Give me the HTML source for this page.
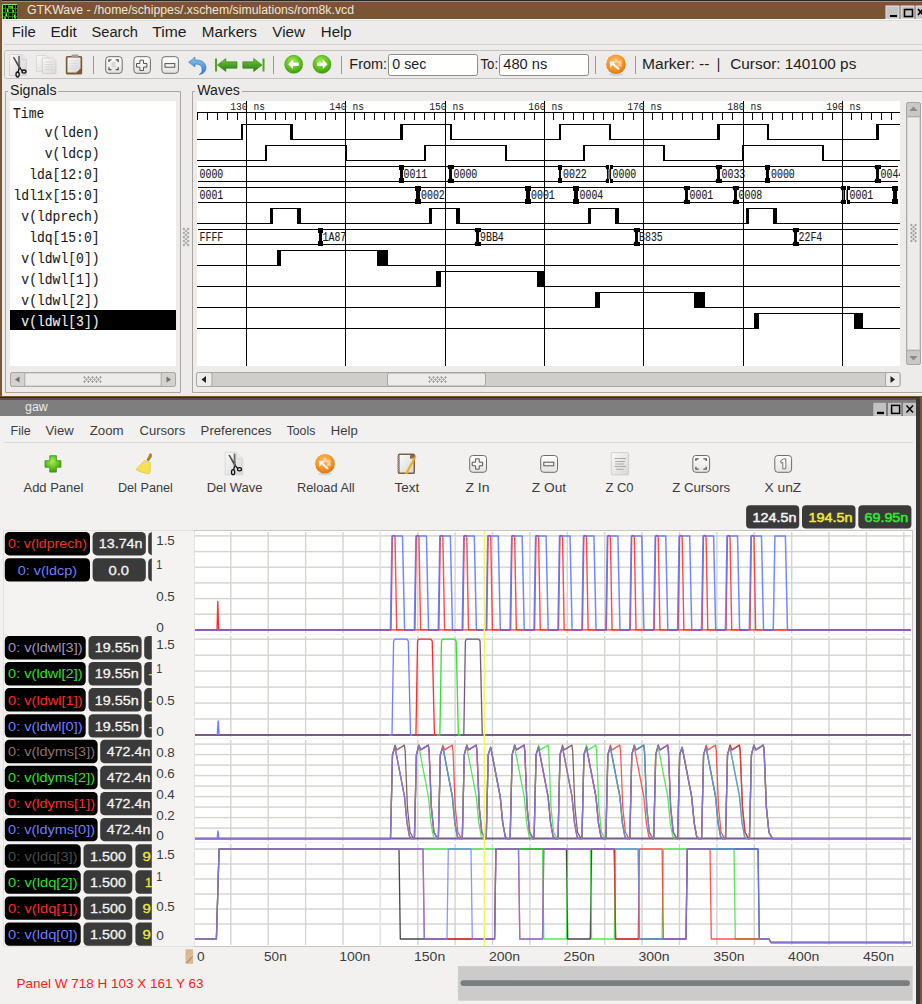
<!DOCTYPE html>
<html><head><meta charset="utf-8"><title>gtkwave + gaw</title>
<style>html,body{margin:0;padding:0;background:#edecea;overflow:hidden}svg{display:block}</style></head>
<body><svg width="922" height="1004" viewBox="0 0 922 1004">
<rect x="0" y="0" width="922" height="397" fill="#edecea" />
<rect x="0" y="0" width="922" height="20" fill="#7a5534" />
<rect x="0" y="0" width="922" height="1" fill="#262626"/>
<rect x="0" y="1" width="922" height="1" fill="#c9852f"/>
<rect x="0" y="0" width="2" height="397" fill="#7a5534" />
<rect x="2" y="4" width="15" height="15" fill="#050505" />
<g stroke="#2e8a1a" stroke-width="0.9" fill="none"><path d="M5.5 4v15 M8.5 4v15 M12.5 4v15 M15.5 4v15 M2 8.5h15 M2 12.5h15 M2 16.5h15"/></g>
<path d="M2.5 19V4.5H17" stroke="#8ee870" stroke-width="1" fill="none"/>
<path d="M8.5 6.8h3.7v1.6 M13.2 10v2.2 M14.5 14.5l0.5 4 M7.5 9v3 M6.5 13.2v3 M5 17v2" stroke="#7ef040" stroke-width="1.3" fill="none"/>
<text x="27" y="14" font-family="Liberation Sans" font-size="12" fill="#efe6da" text-anchor="start" font-weight="normal" textLength="327" lengthAdjust="spacingAndGlyphs" >GTKWave - /home/schippes/.xschem/simulations/rom8k.vcd</text>
<rect x="886" y="6" width="13" height="13" fill="#c4c4c4" stroke="#e6e6e6" stroke-width="1"/>
<rect x="901" y="6" width="13" height="13" fill="#c4c4c4" stroke="#e6e6e6" stroke-width="1"/>
<rect x="916" y="6" width="13" height="13" fill="#c4c4c4" stroke="#e6e6e6" stroke-width="1"/>
<rect x="890" y="15" width="7" height="2" fill="#000" />
<rect x="904.5" y="9.5" width="8" height="7" fill="none" stroke="#000" stroke-width="1.6"/>
<path d="M918 9l5 6 M923 9l-5 6" stroke="#000" stroke-width="1.6"/>
<rect x="2" y="19" width="920" height="1" fill="#fbfbfa"/>
<rect x="4" y="20" width="918" height="24" fill="#edecea" />
<rect x="4" y="20" width="918" height="1" fill="#dedcd8"/>
<rect x="4" y="44" width="918" height="1" fill="#d4d2ce"/>
<text x="11.8" y="37" font-family="Liberation Sans" font-size="14" fill="#1c1c1c" text-anchor="start" font-weight="normal" textLength="23.9" lengthAdjust="spacingAndGlyphs" >File</text>
<text x="50.4" y="37" font-family="Liberation Sans" font-size="14" fill="#1c1c1c" text-anchor="start" font-weight="normal" textLength="26.4" lengthAdjust="spacingAndGlyphs" >Edit</text>
<text x="91.6" y="37" font-family="Liberation Sans" font-size="14" fill="#1c1c1c" text-anchor="start" font-weight="normal" textLength="46.3" lengthAdjust="spacingAndGlyphs" >Search</text>
<text x="152.20000000000002" y="37" font-family="Liberation Sans" font-size="14" fill="#1c1c1c" text-anchor="start" font-weight="normal" textLength="34.3" lengthAdjust="spacingAndGlyphs" >Time</text>
<text x="201.8" y="37" font-family="Liberation Sans" font-size="14" fill="#1c1c1c" text-anchor="start" font-weight="normal" textLength="55.0" lengthAdjust="spacingAndGlyphs" >Markers</text>
<text x="272.3" y="37" font-family="Liberation Sans" font-size="14" fill="#1c1c1c" text-anchor="start" font-weight="normal" textLength="32.7" lengthAdjust="spacingAndGlyphs" >View</text>
<text x="320.8" y="37" font-family="Liberation Sans" font-size="14" fill="#1c1c1c" text-anchor="start" font-weight="normal" textLength="30.9" lengthAdjust="spacingAndGlyphs" >Help</text>
<rect x="4.5" y="50.5" width="922" height="28" fill="#edecea" stroke="#c3c1bd" stroke-width="1" rx="2"/>
<defs>
<linearGradient id="pg" x1="0" y1="0" x2="1" y2="1"><stop offset="0" stop-color="#fafafa"/><stop offset="1" stop-color="#d6d6d6"/></linearGradient>
<linearGradient id="btn" x1="0" y1="0" x2="0" y2="1"><stop offset="0" stop-color="#ffffff"/><stop offset="1" stop-color="#e2e2e2"/></linearGradient>
<radialGradient id="grn" cx="0.45" cy="0.35" r="0.7"><stop offset="0" stop-color="#a8ec5a"/><stop offset="0.6" stop-color="#5cbf1c"/><stop offset="1" stop-color="#3d8f10"/></radialGradient>
<radialGradient id="org" cx="0.45" cy="0.35" r="0.7"><stop offset="0" stop-color="#ffc070"/><stop offset="0.6" stop-color="#f39322"/><stop offset="1" stop-color="#d86f0c"/></radialGradient>
<linearGradient id="blu" x1="0" y1="0" x2="0" y2="1"><stop offset="0" stop-color="#8cc4f0"/><stop offset="1" stop-color="#2f78c4"/></linearGradient>
<linearGradient id="garr" x1="0" y1="0" x2="0" y2="1"><stop offset="0" stop-color="#74c840"/><stop offset="0.5" stop-color="#4aa424"/><stop offset="1" stop-color="#2a7a10"/></linearGradient>
</defs>
<path d="M9.5 54.5h12.5l4.5 5v16h-17z" fill="url(#pg)" stroke="#cfcfcf" stroke-width="0.8"/>
<path d="M22 54.5v5h4.5" fill="#e8e8e8" stroke="#c8c8c8" stroke-width="0.6"/>
<g transform="translate(-215.5,-397.7)"><path d="M228.6 455 L229.8 455.3 L235.8 465.2 L234.8 466.2z" fill="#4a4a4a" stroke="#222" stroke-width="0.4"/><path d="M234 453.8 L235.1 454 L235.3 466 L234.1 467.8z" fill="#8a8a8a" stroke="#222" stroke-width="0.4"/><path d="M235.3 465.6 L237.8 468.6 M234.6 466.5 L233.6 469.6" stroke="#111" stroke-width="1.3" fill="none"/><ellipse cx="233.1" cy="472.2" rx="1.6" ry="2.5" fill="none" stroke="#111" stroke-width="1.3"/><ellipse cx="239.5" cy="469.3" rx="2" ry="1.6" fill="none" stroke="#111" stroke-width="1.3"/></g>
<path d="M36.5 55.5h10l3 3v13h-13z" fill="url(#pg)" stroke="#d2d2d2" stroke-width="0.8"/>
<path d="M42.5 58h10l3.4 3.4v12.3h-13.4z" fill="url(#pg)" stroke="#cdcdcd" stroke-width="0.8"/>
<g stroke="#d0d0d0" stroke-width="0.7"><path d="M44.5 62h9 M44.5 64.5h9 M44.5 67h9 M44.5 69.5h9"/></g>
<rect x="65.8" y="56" width="16.4" height="18.4" rx="1.5" fill="#7c5b34"/>
<path d="M67.5 57.5h13v10.5l-4.5 4.5h-8.5z" fill="url(#pg)"/>
<path d="M76 72.5l4.5-4.5h-4.5z" fill="#efefef" stroke="#bdbdbd" stroke-width="0.5"/>
<rect x="71.5" y="54.6" width="7" height="3" rx="1" fill="#9c9c9c"/>
<g stroke="#d2d2d2" stroke-width="0.7"><path d="M69.5 61h9 M69.5 63.5h9 M69.5 66h9 M69.5 68.5h7"/></g>
<rect x="93.0" y="56" width="1" height="18" fill="#9a9894"/>
<rect x="273.0" y="56" width="1" height="18" fill="#9a9894"/>
<rect x="341.0" y="56" width="1" height="18" fill="#9a9894"/>
<rect x="595.0" y="56" width="1" height="18" fill="#9a9894"/>
<rect x="635.0" y="56" width="1" height="18" fill="#9a9894"/>
<rect x="105.7" y="56.7" width="16.5" height="16.6" rx="3" fill="url(#btn)" stroke="#6d6d6d" stroke-width="1"/>
<rect x="133.9" y="56.7" width="16.5" height="16.6" rx="3" fill="url(#btn)" stroke="#6d6d6d" stroke-width="1"/>
<rect x="161.9" y="56.7" width="16.5" height="16.6" rx="3" fill="url(#btn)" stroke="#6d6d6d" stroke-width="1"/>
<g stroke="#555" stroke-width="1.3" fill="none"><path d="M109 62v-2.2h2.5 M115.7 59.8h2.5v2.2 M118.2 67.3v2.3h-2.5 M111.5 69.6h-2.5v-2.3"/></g>
<rect x="111.5" y="62" width="4.2" height="5.3" fill="#d8d8d8"/>
<path d="M139.9 60.2h3.6v3.3h3.4v3.6h-3.4v3.4h-3.6v-3.4h-3.4v-3.6h3.4z" fill="#f4f4f4" stroke="#555" stroke-width="1"/>
<rect x="165" y="63.6" width="9.8" height="3.6" fill="#f4f4f4" stroke="#555" stroke-width="1"/>
<path d="M195 57 L188.6 62.2 L195 67 L195 64.2 C199.5 63.8 202.5 66 202 70.5 C201.7 72.5 200.5 74 199 74.6 C203.5 74.2 206.2 71 206 67.2 C205.6 62 201 59.6 195 60z" fill="url(#blu)" stroke="#2a6ab0" stroke-width="0.5"/>
<rect x="215" y="58.5" width="2" height="13" fill="#4aa81e"/>
<path d="M217.5 65 L225.8 58.5 V61.8 H237 V68.2 H225.8 V71.5z" fill="url(#garr)" stroke="#2f7a14" stroke-width="0.6"/>
<rect x="262.5" y="58.5" width="2" height="13" fill="#4aa81e"/>
<path d="M262 65 L253.7 58.5 V61.8 H242.8 V68.2 H253.7 V71.5z" fill="url(#garr)" stroke="#2f7a14" stroke-width="0.6"/>
<ellipse cx="293.7" cy="66.2" rx="8" ry="2.5" fill="#000" fill-opacity="0.12"/>
<circle cx="293.7" cy="64.3" r="9" fill="url(#grn)" stroke="#3f9a12" stroke-width="0.6"/>
<path d="M288.2 64.3 L292.9 59.6 V62.5 H298.7 V66.1 H292.9 V69z" fill="#fff"/>
<ellipse cx="322" cy="66.2" rx="8" ry="2.5" fill="#000" fill-opacity="0.12"/>
<circle cx="322" cy="64.3" r="9" fill="url(#grn)" stroke="#3f9a12" stroke-width="0.6"/>
<path d="M327.5 64.3 L322.8 59.6 V62.5 H317 V66.1 H322.8 V69z" fill="#fff"/>
<text x="349.3" y="69" font-family="Liberation Sans" font-size="14" fill="#1c1c1c" text-anchor="start" font-weight="normal" textLength="37.8" lengthAdjust="spacingAndGlyphs" >From:</text>
<rect x="388.5" y="54.5" width="89" height="21" rx="2" fill="#fff" stroke="#8f8c87" stroke-width="1"/>
<text x="392.3" y="69" font-family="Liberation Sans" font-size="14" fill="#1c1c1c" text-anchor="start" font-weight="normal" textLength="34" lengthAdjust="spacingAndGlyphs" >0 sec</text>
<text x="480.5" y="69" font-family="Liberation Sans" font-size="14" fill="#1c1c1c" text-anchor="start" font-weight="normal" textLength="17.6" lengthAdjust="spacingAndGlyphs" >To:</text>
<rect x="499.5" y="54.5" width="89" height="21" rx="2" fill="#fff" stroke="#8f8c87" stroke-width="1"/>
<text x="503.3" y="69" font-family="Liberation Sans" font-size="14" fill="#1c1c1c" text-anchor="start" font-weight="normal" textLength="44" lengthAdjust="spacingAndGlyphs" >480 ns</text>
<g transform="translate(291,-399.4)"><ellipse cx="325" cy="473.8" rx="7" ry="1.6" fill="#9aa8b8" fill-opacity="0.35"/><circle cx="325" cy="463.7" r="9.8" fill="url(#org)"/><path d="M323.5 460 L324.6 457.4 L327.5 460.3 L330.5 459.6 L330.8 466.2 L325.8 465.6 L328 463.2z" fill="#f8d6a8" fill-opacity="0.85"/><path d="M318.8 460.8 L325 460.9 L323 463 L328.8 467.9 L327.3 469.5 L321.5 464.5 L319.2 467.2z" fill="#f4f4f4"/></g>
<text x="642" y="69" font-family="Liberation Sans" font-size="14" fill="#1c1c1c" text-anchor="start" font-weight="normal" textLength="67.5" lengthAdjust="spacingAndGlyphs" >Marker: --</text>
<text x="716.8" y="69" font-family="Liberation Sans" font-size="14" fill="#1c1c1c" text-anchor="start" font-weight="normal" textLength="3.5" lengthAdjust="spacingAndGlyphs" >|</text>
<text x="730.3" y="69" font-family="Liberation Sans" font-size="14" fill="#1c1c1c" text-anchor="start" font-weight="normal" textLength="126" lengthAdjust="spacingAndGlyphs" >Cursor: 140100 ps</text>
<path d="M8 91.5 H5.5 V392.5 H180.5 V91.5 H58" fill="none" stroke="#a9a6a1" stroke-width="1"/>
<text x="10" y="95" font-family="Liberation Sans" font-size="14" fill="#1c1c1c" text-anchor="start" font-weight="normal" textLength="46.5" lengthAdjust="spacingAndGlyphs" >Signals</text>
<rect x="10" y="101" width="166" height="265" fill="#ffffff" />
<rect x="10" y="310" width="166" height="20" fill="#000000" />
<text x="13" y="117.5" font-family="Liberation Mono" font-size="14.5" fill="#1a1a1a" text-anchor="start" font-weight="normal" textLength="31.32" lengthAdjust="spacingAndGlyphs" stroke="#1a1a1a" stroke-width="0.1">Time</text>
<text x="44.79" y="136.8" font-family="Liberation Mono" font-size="14.5" fill="#1a1a1a" text-anchor="start" font-weight="normal" textLength="54.81" lengthAdjust="spacingAndGlyphs" stroke="#1a1a1a" stroke-width="0.1">v(lden)</text>
<text x="44.79" y="157.8" font-family="Liberation Mono" font-size="14.5" fill="#1a1a1a" text-anchor="start" font-weight="normal" textLength="54.81" lengthAdjust="spacingAndGlyphs" stroke="#1a1a1a" stroke-width="0.1">v(ldcp)</text>
<text x="29.13" y="178.8" font-family="Liberation Mono" font-size="14.5" fill="#1a1a1a" text-anchor="start" font-weight="normal" textLength="70.47" lengthAdjust="spacingAndGlyphs" stroke="#1a1a1a" stroke-width="0.1">lda[12:0]</text>
<text x="13.47" y="199.8" font-family="Liberation Mono" font-size="14.5" fill="#1a1a1a" text-anchor="start" font-weight="normal" textLength="86.13" lengthAdjust="spacingAndGlyphs" stroke="#1a1a1a" stroke-width="0.1">ldl1x[15:0]</text>
<text x="21.3" y="220.8" font-family="Liberation Mono" font-size="14.5" fill="#1a1a1a" text-anchor="start" font-weight="normal" textLength="78.3" lengthAdjust="spacingAndGlyphs" stroke="#1a1a1a" stroke-width="0.1">v(ldprech)</text>
<text x="29.13" y="241.8" font-family="Liberation Mono" font-size="14.5" fill="#1a1a1a" text-anchor="start" font-weight="normal" textLength="70.47" lengthAdjust="spacingAndGlyphs" stroke="#1a1a1a" stroke-width="0.1">ldq[15:0]</text>
<text x="21.3" y="262.8" font-family="Liberation Mono" font-size="14.5" fill="#1a1a1a" text-anchor="start" font-weight="normal" textLength="78.3" lengthAdjust="spacingAndGlyphs" stroke="#1a1a1a" stroke-width="0.1">v(ldwl[0])</text>
<text x="21.3" y="283.8" font-family="Liberation Mono" font-size="14.5" fill="#1a1a1a" text-anchor="start" font-weight="normal" textLength="78.3" lengthAdjust="spacingAndGlyphs" stroke="#1a1a1a" stroke-width="0.1">v(ldwl[1])</text>
<text x="21.3" y="304.8" font-family="Liberation Mono" font-size="14.5" fill="#1a1a1a" text-anchor="start" font-weight="normal" textLength="78.3" lengthAdjust="spacingAndGlyphs" stroke="#1a1a1a" stroke-width="0.1">v(ldwl[2])</text>
<text x="21.3" y="325.8" font-family="Liberation Mono" font-size="14.5" fill="#f0f0f0" text-anchor="start" font-weight="normal" textLength="78.3" lengthAdjust="spacingAndGlyphs" stroke="#f0f0f0" stroke-width="0.1">v(ldwl[3])</text>
<rect x="10.5" y="372.5" width="165" height="14" rx="2" fill="#e4e3e0" stroke="#a8a6a2" stroke-width="1"/>
<rect x="10.5" y="372.5" width="14.5" height="14" rx="2" fill="#d3d2cf" stroke="#a8a6a2" stroke-width="1"/>
<rect x="161" y="372.5" width="14.5" height="14" rx="2" fill="#d3d2cf" stroke="#a8a6a2" stroke-width="1"/>
<rect x="25" y="373" width="136" height="13" fill="#edecea" stroke="#b8b6b2" stroke-width="0.8"/>
<path d="M15 379.5 L19.5 376.5 V382.5z" fill="#6e6e6e"/><path d="M171 379.5 L166.5 376.5 V382.5z" fill="#6e6e6e"/>
<g fill="#9c9c9c"><rect x="83.3" y="376.9" width="2.4" height="1"/><rect x="84.0" y="376.2" width="1" height="2.4"/><rect x="87.3" y="376.9" width="2.4" height="1"/><rect x="88.0" y="376.2" width="1" height="2.4"/><rect x="91.3" y="376.9" width="2.4" height="1"/><rect x="92.0" y="376.2" width="1" height="2.4"/><rect x="95.3" y="376.9" width="2.4" height="1"/><rect x="96.0" y="376.2" width="1" height="2.4"/><rect x="99.3" y="376.9" width="2.4" height="1"/><rect x="100.0" y="376.2" width="1" height="2.4"/><rect x="85.3" y="379.0" width="2.4" height="1"/><rect x="86.0" y="378.3" width="1" height="2.4"/><rect x="89.3" y="379.0" width="2.4" height="1"/><rect x="90.0" y="378.3" width="1" height="2.4"/><rect x="93.3" y="379.0" width="2.4" height="1"/><rect x="94.0" y="378.3" width="1" height="2.4"/><rect x="97.3" y="379.0" width="2.4" height="1"/><rect x="98.0" y="378.3" width="1" height="2.4"/><rect x="83.3" y="381.1" width="2.4" height="1"/><rect x="84.0" y="380.4" width="1" height="2.4"/><rect x="87.3" y="381.1" width="2.4" height="1"/><rect x="88.0" y="380.4" width="1" height="2.4"/><rect x="91.3" y="381.1" width="2.4" height="1"/><rect x="92.0" y="380.4" width="1" height="2.4"/><rect x="95.3" y="381.1" width="2.4" height="1"/><rect x="96.0" y="380.4" width="1" height="2.4"/><rect x="99.3" y="381.1" width="2.4" height="1"/><rect x="100.0" y="380.4" width="1" height="2.4"/></g>
<g fill="#9c9c9c"><rect x="182.7" y="228.5" width="2.4" height="1"/><rect x="183.4" y="227.8" width="1" height="2.4"/><rect x="182.7" y="232.5" width="2.4" height="1"/><rect x="183.4" y="231.8" width="1" height="2.4"/><rect x="182.7" y="236.5" width="2.4" height="1"/><rect x="183.4" y="235.8" width="1" height="2.4"/><rect x="182.7" y="240.5" width="2.4" height="1"/><rect x="183.4" y="239.8" width="1" height="2.4"/><rect x="182.7" y="244.5" width="2.4" height="1"/><rect x="183.4" y="243.8" width="1" height="2.4"/><rect x="184.8" y="230.5" width="2.4" height="1"/><rect x="185.5" y="229.8" width="1" height="2.4"/><rect x="184.8" y="234.5" width="2.4" height="1"/><rect x="185.5" y="233.8" width="1" height="2.4"/><rect x="184.8" y="238.5" width="2.4" height="1"/><rect x="185.5" y="237.8" width="1" height="2.4"/><rect x="184.8" y="242.5" width="2.4" height="1"/><rect x="185.5" y="241.8" width="1" height="2.4"/><rect x="186.9" y="228.5" width="2.4" height="1"/><rect x="187.6" y="227.8" width="1" height="2.4"/><rect x="186.9" y="232.5" width="2.4" height="1"/><rect x="187.6" y="231.8" width="1" height="2.4"/><rect x="186.9" y="236.5" width="2.4" height="1"/><rect x="187.6" y="235.8" width="1" height="2.4"/><rect x="186.9" y="240.5" width="2.4" height="1"/><rect x="187.6" y="239.8" width="1" height="2.4"/><rect x="186.9" y="244.5" width="2.4" height="1"/><rect x="187.6" y="243.8" width="1" height="2.4"/></g>
<path d="M195 91.5 H192.5 V392.5 H922 M922 91.5 H242" fill="none" stroke="#a9a6a1" stroke-width="1"/>
<rect x="193" y="393" width="729" height="1" fill="#f8f8f7"/>
<text x="197.3" y="95" font-family="Liberation Sans" font-size="14" fill="#1c1c1c" text-anchor="start" font-weight="normal" textLength="42.5" lengthAdjust="spacingAndGlyphs" >Waves</text>
<rect x="197" y="101" width="703" height="265" fill="#ffffff" />
<rect x="906.5" y="102.5" width="14" height="262" rx="2" fill="#e4e3e0" stroke="#a8a6a2" stroke-width="1"/>
<rect x="906.5" y="102.5" width="14" height="14" rx="2" fill="#c9c8c5" stroke="#a8a6a2" stroke-width="1"/>
<rect x="906.5" y="350.5" width="14" height="14" rx="2" fill="#c9c8c5" stroke="#a8a6a2" stroke-width="1"/>
<rect x="907" y="117" width="13" height="233" rx="1" fill="#edecea" stroke="#b8b6b2" stroke-width="0.8"/>
<path d="M913.5 106.5 L917.5 111 H909.5z" fill="#8a8a8a"/><path d="M913.5 360.5 L917.5 356 H909.5z" fill="#8a8a8a"/>
<g fill="#9c9c9c"><rect x="910.2" y="224.5" width="2.4" height="1"/><rect x="910.9" y="223.8" width="1" height="2.4"/><rect x="910.2" y="228.5" width="2.4" height="1"/><rect x="910.9" y="227.8" width="1" height="2.4"/><rect x="910.2" y="232.5" width="2.4" height="1"/><rect x="910.9" y="231.8" width="1" height="2.4"/><rect x="910.2" y="236.5" width="2.4" height="1"/><rect x="910.9" y="235.8" width="1" height="2.4"/><rect x="910.2" y="240.5" width="2.4" height="1"/><rect x="910.9" y="239.8" width="1" height="2.4"/><rect x="912.3" y="226.5" width="2.4" height="1"/><rect x="913.0" y="225.8" width="1" height="2.4"/><rect x="912.3" y="230.5" width="2.4" height="1"/><rect x="913.0" y="229.8" width="1" height="2.4"/><rect x="912.3" y="234.5" width="2.4" height="1"/><rect x="913.0" y="233.8" width="1" height="2.4"/><rect x="912.3" y="238.5" width="2.4" height="1"/><rect x="913.0" y="237.8" width="1" height="2.4"/><rect x="914.4" y="224.5" width="2.4" height="1"/><rect x="915.1" y="223.8" width="1" height="2.4"/><rect x="914.4" y="228.5" width="2.4" height="1"/><rect x="915.1" y="227.8" width="1" height="2.4"/><rect x="914.4" y="232.5" width="2.4" height="1"/><rect x="915.1" y="231.8" width="1" height="2.4"/><rect x="914.4" y="236.5" width="2.4" height="1"/><rect x="915.1" y="235.8" width="1" height="2.4"/><rect x="914.4" y="240.5" width="2.4" height="1"/><rect x="915.1" y="239.8" width="1" height="2.4"/></g>
<rect x="196.5" y="372.5" width="703.5" height="14" rx="2" fill="#cfcecb" stroke="#a8a6a2" stroke-width="1"/>
<rect x="196.5" y="372.5" width="15.5" height="14" rx="2" fill="#edecea" stroke="#a8a6a2" stroke-width="1"/>
<rect x="885.5" y="372.5" width="14.5" height="14" rx="2" fill="#edecea" stroke="#a8a6a2" stroke-width="1"/>
<rect x="387.5" y="373" width="98" height="13" rx="2" fill="#edecea" stroke="#a8a6a2" stroke-width="1"/>
<path d="M201.5 379.5 L206 376 V383z" fill="#222"/><path d="M895 379.5 L890.5 376 V383z" fill="#222"/>
<g fill="#9c9c9c"><rect x="428.3" y="376.9" width="2.4" height="1"/><rect x="429.0" y="376.2" width="1" height="2.4"/><rect x="432.3" y="376.9" width="2.4" height="1"/><rect x="433.0" y="376.2" width="1" height="2.4"/><rect x="436.3" y="376.9" width="2.4" height="1"/><rect x="437.0" y="376.2" width="1" height="2.4"/><rect x="440.3" y="376.9" width="2.4" height="1"/><rect x="441.0" y="376.2" width="1" height="2.4"/><rect x="444.3" y="376.9" width="2.4" height="1"/><rect x="445.0" y="376.2" width="1" height="2.4"/><rect x="430.3" y="379.0" width="2.4" height="1"/><rect x="431.0" y="378.3" width="1" height="2.4"/><rect x="434.3" y="379.0" width="2.4" height="1"/><rect x="435.0" y="378.3" width="1" height="2.4"/><rect x="438.3" y="379.0" width="2.4" height="1"/><rect x="439.0" y="378.3" width="1" height="2.4"/><rect x="442.3" y="379.0" width="2.4" height="1"/><rect x="443.0" y="378.3" width="1" height="2.4"/><rect x="428.3" y="381.1" width="2.4" height="1"/><rect x="429.0" y="380.4" width="1" height="2.4"/><rect x="432.3" y="381.1" width="2.4" height="1"/><rect x="433.0" y="380.4" width="1" height="2.4"/><rect x="436.3" y="381.1" width="2.4" height="1"/><rect x="437.0" y="380.4" width="1" height="2.4"/><rect x="440.3" y="381.1" width="2.4" height="1"/><rect x="441.0" y="380.4" width="1" height="2.4"/><rect x="444.3" y="381.1" width="2.4" height="1"/><rect x="445.0" y="380.4" width="1" height="2.4"/></g>
<rect x="0" y="396" width="922" height="1" fill="#7a5534"/>
<g shape-rendering="crispEdges">
<rect x="197" y="112" width="703" height="1" fill="#000000"/>
<rect x="197" y="113" width="1" height="7" fill="#000000"/>
<rect x="207" y="113" width="1" height="7" fill="#000000"/>
<rect x="217" y="113" width="1" height="7" fill="#000000"/>
<rect x="227" y="113" width="1" height="7" fill="#000000"/>
<rect x="237" y="113" width="1" height="7" fill="#000000"/>
<rect x="255" y="113" width="1" height="7" fill="#000000"/>
<rect x="265" y="113" width="1" height="7" fill="#000000"/>
<rect x="275" y="113" width="1" height="7" fill="#000000"/>
<rect x="285" y="113" width="1" height="7" fill="#000000"/>
<rect x="295" y="113" width="1" height="7" fill="#000000"/>
<rect x="305" y="113" width="1" height="7" fill="#000000"/>
<rect x="315" y="113" width="1" height="7" fill="#000000"/>
<rect x="325" y="113" width="1" height="7" fill="#000000"/>
<rect x="335" y="113" width="1" height="7" fill="#000000"/>
<rect x="354" y="113" width="1" height="7" fill="#000000"/>
<rect x="364" y="113" width="1" height="7" fill="#000000"/>
<rect x="374" y="113" width="1" height="7" fill="#000000"/>
<rect x="384" y="113" width="1" height="7" fill="#000000"/>
<rect x="394" y="113" width="1" height="7" fill="#000000"/>
<rect x="404" y="113" width="1" height="7" fill="#000000"/>
<rect x="414" y="113" width="1" height="7" fill="#000000"/>
<rect x="424" y="113" width="1" height="7" fill="#000000"/>
<rect x="434" y="113" width="1" height="7" fill="#000000"/>
<rect x="454" y="113" width="1" height="7" fill="#000000"/>
<rect x="464" y="113" width="1" height="7" fill="#000000"/>
<rect x="474" y="113" width="1" height="7" fill="#000000"/>
<rect x="484" y="113" width="1" height="7" fill="#000000"/>
<rect x="494" y="113" width="1" height="7" fill="#000000"/>
<rect x="504" y="113" width="1" height="7" fill="#000000"/>
<rect x="514" y="113" width="1" height="7" fill="#000000"/>
<rect x="524" y="113" width="1" height="7" fill="#000000"/>
<rect x="534" y="113" width="1" height="7" fill="#000000"/>
<rect x="553" y="113" width="1" height="7" fill="#000000"/>
<rect x="563" y="113" width="1" height="7" fill="#000000"/>
<rect x="573" y="113" width="1" height="7" fill="#000000"/>
<rect x="583" y="113" width="1" height="7" fill="#000000"/>
<rect x="593" y="113" width="1" height="7" fill="#000000"/>
<rect x="603" y="113" width="1" height="7" fill="#000000"/>
<rect x="613" y="113" width="1" height="7" fill="#000000"/>
<rect x="623" y="113" width="1" height="7" fill="#000000"/>
<rect x="633" y="113" width="1" height="7" fill="#000000"/>
<rect x="652" y="113" width="1" height="7" fill="#000000"/>
<rect x="662" y="113" width="1" height="7" fill="#000000"/>
<rect x="672" y="113" width="1" height="7" fill="#000000"/>
<rect x="682" y="113" width="1" height="7" fill="#000000"/>
<rect x="692" y="113" width="1" height="7" fill="#000000"/>
<rect x="702" y="113" width="1" height="7" fill="#000000"/>
<rect x="712" y="113" width="1" height="7" fill="#000000"/>
<rect x="722" y="113" width="1" height="7" fill="#000000"/>
<rect x="732" y="113" width="1" height="7" fill="#000000"/>
<rect x="752" y="113" width="1" height="7" fill="#000000"/>
<rect x="762" y="113" width="1" height="7" fill="#000000"/>
<rect x="772" y="113" width="1" height="7" fill="#000000"/>
<rect x="782" y="113" width="1" height="7" fill="#000000"/>
<rect x="792" y="113" width="1" height="7" fill="#000000"/>
<rect x="802" y="113" width="1" height="7" fill="#000000"/>
<rect x="812" y="113" width="1" height="7" fill="#000000"/>
<rect x="822" y="113" width="1" height="7" fill="#000000"/>
<rect x="832" y="113" width="1" height="7" fill="#000000"/>
<rect x="851" y="113" width="1" height="7" fill="#000000"/>
<rect x="861" y="113" width="1" height="7" fill="#000000"/>
<rect x="871" y="113" width="1" height="7" fill="#000000"/>
<rect x="881" y="113" width="1" height="7" fill="#000000"/>
<rect x="891" y="113" width="1" height="7" fill="#000000"/>
<rect x="246" y="101" width="1" height="265" fill="#000000"/>
<rect x="345" y="101" width="1" height="265" fill="#000000"/>
<rect x="445" y="101" width="1" height="265" fill="#000000"/>
<rect x="544" y="101" width="1" height="265" fill="#000000"/>
<rect x="643" y="101" width="1" height="265" fill="#000000"/>
<rect x="743" y="101" width="1" height="265" fill="#000000"/>
<rect x="842" y="101" width="1" height="265" fill="#000000"/>
</g>
<text x="230.2" y="110" font-family="Liberation Mono" font-size="11.8" fill="#1a1a1a" text-anchor="start" font-weight="normal" textLength="17.5" lengthAdjust="spacingAndGlyphs" >130</text>
<text x="253.5" y="110" font-family="Liberation Mono" font-size="11.8" fill="#1a1a1a" text-anchor="start" font-weight="normal" textLength="11.5" lengthAdjust="spacingAndGlyphs" >ns</text>
<text x="329.2" y="110" font-family="Liberation Mono" font-size="11.8" fill="#1a1a1a" text-anchor="start" font-weight="normal" textLength="17.5" lengthAdjust="spacingAndGlyphs" >140</text>
<text x="352.5" y="110" font-family="Liberation Mono" font-size="11.8" fill="#1a1a1a" text-anchor="start" font-weight="normal" textLength="11.5" lengthAdjust="spacingAndGlyphs" >ns</text>
<text x="429.2" y="110" font-family="Liberation Mono" font-size="11.8" fill="#1a1a1a" text-anchor="start" font-weight="normal" textLength="17.5" lengthAdjust="spacingAndGlyphs" >150</text>
<text x="452.5" y="110" font-family="Liberation Mono" font-size="11.8" fill="#1a1a1a" text-anchor="start" font-weight="normal" textLength="11.5" lengthAdjust="spacingAndGlyphs" >ns</text>
<text x="528.2" y="110" font-family="Liberation Mono" font-size="11.8" fill="#1a1a1a" text-anchor="start" font-weight="normal" textLength="17.5" lengthAdjust="spacingAndGlyphs" >160</text>
<text x="551.5" y="110" font-family="Liberation Mono" font-size="11.8" fill="#1a1a1a" text-anchor="start" font-weight="normal" textLength="11.5" lengthAdjust="spacingAndGlyphs" >ns</text>
<text x="627.2" y="110" font-family="Liberation Mono" font-size="11.8" fill="#1a1a1a" text-anchor="start" font-weight="normal" textLength="17.5" lengthAdjust="spacingAndGlyphs" >170</text>
<text x="650.5" y="110" font-family="Liberation Mono" font-size="11.8" fill="#1a1a1a" text-anchor="start" font-weight="normal" textLength="11.5" lengthAdjust="spacingAndGlyphs" >ns</text>
<text x="727.2" y="110" font-family="Liberation Mono" font-size="11.8" fill="#1a1a1a" text-anchor="start" font-weight="normal" textLength="17.5" lengthAdjust="spacingAndGlyphs" >180</text>
<text x="750.5" y="110" font-family="Liberation Mono" font-size="11.8" fill="#1a1a1a" text-anchor="start" font-weight="normal" textLength="11.5" lengthAdjust="spacingAndGlyphs" >ns</text>
<text x="826.2" y="110" font-family="Liberation Mono" font-size="11.8" fill="#1a1a1a" text-anchor="start" font-weight="normal" textLength="17.5" lengthAdjust="spacingAndGlyphs" >190</text>
<text x="849.5" y="110" font-family="Liberation Mono" font-size="11.8" fill="#1a1a1a" text-anchor="start" font-weight="normal" textLength="11.5" lengthAdjust="spacingAndGlyphs" >ns</text>
<g shape-rendering="crispEdges">
<rect x="197" y="139" width="45" height="1" fill="#000000"/>
<rect x="241" y="124" width="2" height="16" fill="#000000" />
<rect x="242" y="124" width="49" height="1" fill="#000000"/>
<rect x="290" y="124" width="3" height="16" fill="#000000" />
<rect x="292" y="139" width="109" height="1" fill="#000000"/>
<rect x="400" y="124" width="3" height="16" fill="#000000" />
<rect x="402" y="124" width="49" height="1" fill="#000000"/>
<rect x="450" y="124" width="2" height="16" fill="#000000" />
<rect x="451" y="139" width="109" height="1" fill="#000000"/>
<rect x="559" y="124" width="2" height="16" fill="#000000" />
<rect x="560" y="124" width="50" height="1" fill="#000000"/>
<rect x="609" y="124" width="2" height="16" fill="#000000" />
<rect x="610" y="139" width="108" height="1" fill="#000000"/>
<rect x="717" y="124" width="3" height="16" fill="#000000" />
<rect x="719" y="124" width="49" height="1" fill="#000000"/>
<rect x="767" y="124" width="2" height="16" fill="#000000" />
<rect x="768" y="139" width="109" height="1" fill="#000000"/>
<rect x="876" y="124" width="3" height="16" fill="#000000" />
<rect x="878" y="124" width="22" height="1" fill="#000000"/>
<rect x="197" y="160" width="69" height="1" fill="#000000"/>
<rect x="265" y="145" width="2" height="16" fill="#000000" />
<rect x="266" y="145" width="80" height="1" fill="#000000"/>
<rect x="345" y="145" width="2" height="16" fill="#000000" />
<rect x="346" y="160" width="79" height="1" fill="#000000"/>
<rect x="424" y="145" width="2" height="16" fill="#000000" />
<rect x="425" y="145" width="81" height="1" fill="#000000"/>
<rect x="505" y="145" width="2" height="16" fill="#000000" />
<rect x="506" y="160" width="78" height="1" fill="#000000"/>
<rect x="583" y="145" width="2" height="16" fill="#000000" />
<rect x="584" y="145" width="80" height="1" fill="#000000"/>
<rect x="663" y="145" width="2" height="16" fill="#000000" />
<rect x="664" y="160" width="79" height="1" fill="#000000"/>
<rect x="742" y="145" width="2" height="16" fill="#000000" />
<rect x="743" y="145" width="80" height="1" fill="#000000"/>
<rect x="822" y="145" width="2" height="16" fill="#000000" />
<rect x="823" y="160" width="77" height="1" fill="#000000"/>
<rect x="197" y="223" width="74" height="1" fill="#000000"/>
<rect x="270" y="208" width="3" height="16" fill="#000000" />
<rect x="272" y="208" width="26" height="1" fill="#000000"/>
<rect x="297" y="208" width="4" height="16" fill="#000000" />
<rect x="300" y="223" width="130" height="1" fill="#000000"/>
<rect x="429" y="208" width="3" height="16" fill="#000000" />
<rect x="431" y="208" width="26" height="1" fill="#000000"/>
<rect x="456" y="208" width="4" height="16" fill="#000000" />
<rect x="459" y="223" width="130" height="1" fill="#000000"/>
<rect x="588" y="208" width="3" height="16" fill="#000000" />
<rect x="590" y="208" width="26" height="1" fill="#000000"/>
<rect x="615" y="208" width="4" height="16" fill="#000000" />
<rect x="618" y="223" width="129" height="1" fill="#000000"/>
<rect x="746" y="208" width="3" height="16" fill="#000000" />
<rect x="748" y="208" width="26" height="1" fill="#000000"/>
<rect x="773" y="208" width="4" height="16" fill="#000000" />
<rect x="776" y="223" width="124" height="1" fill="#000000"/>
<rect x="197" y="265" width="81" height="1" fill="#000000"/>
<rect x="277" y="250" width="4" height="16" fill="#000000" />
<rect x="280" y="250" width="98" height="1" fill="#000000"/>
<rect x="377" y="250" width="11" height="16" fill="#000000" />
<rect x="387" y="265" width="513" height="1" fill="#000000"/>
<rect x="197" y="286" width="240" height="1" fill="#000000"/>
<rect x="436" y="271" width="5" height="16" fill="#000000" />
<rect x="440" y="271" width="98" height="1" fill="#000000"/>
<rect x="537" y="271" width="8" height="16" fill="#000000" />
<rect x="544" y="286" width="356" height="1" fill="#000000"/>
<rect x="197" y="307" width="399" height="1" fill="#000000"/>
<rect x="595" y="292" width="5" height="16" fill="#000000" />
<rect x="599" y="292" width="96" height="1" fill="#000000"/>
<rect x="694" y="292" width="11" height="16" fill="#000000" />
<rect x="704" y="307" width="196" height="1" fill="#000000"/>
<rect x="197" y="328" width="558" height="1" fill="#000000"/>
<rect x="754" y="313" width="5" height="16" fill="#000000" />
<rect x="758" y="313" width="97" height="1" fill="#000000"/>
<rect x="854" y="313" width="9" height="16" fill="#000000" />
<rect x="862" y="328" width="38" height="1" fill="#000000"/>
<rect x="198" y="166" width="202" height="1" fill="#000000"/>
<rect x="198" y="181" width="202" height="1" fill="#000000"/>
<rect x="399" y="165" width="5" height="5" fill="#000000" />
<rect x="399" y="178" width="5" height="5" fill="#000000" />
<rect x="400" y="166" width="3" height="16" fill="#000000" />
<rect x="404" y="166" width="44" height="1" fill="#000000"/>
<rect x="404" y="181" width="44" height="1" fill="#000000"/>
<path d="M448 166.5 L449.8 169.5 L449.8 178.5 L448 181.5 M453 166.5 L451.2 169.5 L451.2 178.5 L453 181.5" fill="none" stroke="#000" stroke-width="1.5" shape-rendering="geometricPrecision"/>
<rect x="447.5" y="165" width="3" height="4" fill="#000000" />
<rect x="447.5" y="178.5" width="3" height="4" fill="#000000" />
<rect x="450.5" y="165" width="3" height="4" fill="#000000" />
<rect x="450.5" y="178.5" width="3" height="4" fill="#000000" />
<rect x="453" y="166" width="106" height="1" fill="#000000"/>
<rect x="453" y="181" width="106" height="1" fill="#000000"/>
<rect x="558" y="165" width="4" height="5" fill="#000000" />
<rect x="558" y="178" width="4" height="5" fill="#000000" />
<rect x="559" y="166" width="2" height="16" fill="#000000" />
<rect x="562" y="166" width="44" height="1" fill="#000000"/>
<rect x="562" y="181" width="44" height="1" fill="#000000"/>
<path d="M606 166.5 L607.8 169.5 L607.8 178.5 L606 181.5 M612 166.5 L610.2 169.5 L610.2 178.5 L612 181.5" fill="none" stroke="#000" stroke-width="1.5" shape-rendering="geometricPrecision"/>
<rect x="605.5" y="165" width="3" height="4" fill="#000000" />
<rect x="605.5" y="178.5" width="3" height="4" fill="#000000" />
<rect x="609.5" y="165" width="3" height="4" fill="#000000" />
<rect x="609.5" y="178.5" width="3" height="4" fill="#000000" />
<rect x="612" y="166" width="104" height="1" fill="#000000"/>
<rect x="612" y="181" width="104" height="1" fill="#000000"/>
<path d="M716 166.5 L717.8 169.5 L717.8 178.5 L716 181.5 M721 166.5 L719.2 169.5 L719.2 178.5 L721 181.5" fill="none" stroke="#000" stroke-width="1.5" shape-rendering="geometricPrecision"/>
<rect x="715.5" y="165" width="3" height="4" fill="#000000" />
<rect x="715.5" y="178.5" width="3" height="4" fill="#000000" />
<rect x="718.5" y="165" width="3" height="4" fill="#000000" />
<rect x="718.5" y="178.5" width="3" height="4" fill="#000000" />
<rect x="721" y="166" width="45" height="1" fill="#000000"/>
<rect x="721" y="181" width="45" height="1" fill="#000000"/>
<rect x="765" y="165" width="5" height="5" fill="#000000" />
<rect x="765" y="178" width="5" height="5" fill="#000000" />
<rect x="766" y="166" width="3" height="16" fill="#000000" />
<rect x="770" y="166" width="105" height="1" fill="#000000"/>
<rect x="770" y="181" width="105" height="1" fill="#000000"/>
<path d="M875 166.5 L876.8 169.5 L876.8 178.5 L875 181.5 M880 166.5 L878.2 169.5 L878.2 178.5 L880 181.5" fill="none" stroke="#000" stroke-width="1.5" shape-rendering="geometricPrecision"/>
<rect x="874.5" y="165" width="3" height="4" fill="#000000" />
<rect x="874.5" y="178.5" width="3" height="4" fill="#000000" />
<rect x="877.5" y="165" width="3" height="4" fill="#000000" />
<rect x="877.5" y="178.5" width="3" height="4" fill="#000000" />
<rect x="880" y="166" width="18" height="1" fill="#000000"/>
<rect x="880" y="181" width="18" height="1" fill="#000000"/>
<rect x="198" y="187" width="218" height="1" fill="#000000"/>
<rect x="198" y="202" width="218" height="1" fill="#000000"/>
<rect x="415" y="186" width="6" height="5" fill="#000000" />
<rect x="415" y="199" width="6" height="5" fill="#000000" />
<rect x="416" y="187" width="4" height="16" fill="#000000" />
<rect x="421" y="187" width="105" height="1" fill="#000000"/>
<rect x="421" y="202" width="105" height="1" fill="#000000"/>
<rect x="525" y="186" width="6" height="5" fill="#000000" />
<rect x="525" y="199" width="6" height="5" fill="#000000" />
<rect x="526" y="187" width="4" height="16" fill="#000000" />
<rect x="531" y="187" width="43" height="1" fill="#000000"/>
<rect x="531" y="202" width="43" height="1" fill="#000000"/>
<rect x="573" y="186" width="6" height="5" fill="#000000" />
<rect x="573" y="199" width="6" height="5" fill="#000000" />
<rect x="574" y="187" width="4" height="16" fill="#000000" />
<rect x="579" y="187" width="105" height="1" fill="#000000"/>
<rect x="579" y="202" width="105" height="1" fill="#000000"/>
<path d="M684 187.5 L685.8 190.5 L685.8 199.5 L684 202.5 M689 187.5 L687.2 190.5 L687.2 199.5 L689 202.5" fill="none" stroke="#000" stroke-width="1.5" shape-rendering="geometricPrecision"/>
<rect x="683.5" y="186" width="3" height="4" fill="#000000" />
<rect x="683.5" y="199.5" width="3" height="4" fill="#000000" />
<rect x="686.5" y="186" width="3" height="4" fill="#000000" />
<rect x="686.5" y="199.5" width="3" height="4" fill="#000000" />
<rect x="689" y="187" width="44" height="1" fill="#000000"/>
<rect x="689" y="202" width="44" height="1" fill="#000000"/>
<path d="M733 187.5 L734.8 190.5 L734.8 199.5 L733 202.5 M738 187.5 L736.2 190.5 L736.2 199.5 L738 202.5" fill="none" stroke="#000" stroke-width="1.5" shape-rendering="geometricPrecision"/>
<rect x="732.5" y="186" width="3" height="4" fill="#000000" />
<rect x="732.5" y="199.5" width="3" height="4" fill="#000000" />
<rect x="735.5" y="186" width="3" height="4" fill="#000000" />
<rect x="735.5" y="199.5" width="3" height="4" fill="#000000" />
<rect x="738" y="187" width="103" height="1" fill="#000000"/>
<rect x="738" y="202" width="103" height="1" fill="#000000"/>
<path d="M841 187.5 L842.8 190.5 L842.8 199.5 L841 202.5 M849 187.5 L847.2 190.5 L847.2 199.5 L849 202.5" fill="none" stroke="#000" stroke-width="1.5" shape-rendering="geometricPrecision"/>
<rect x="840.5" y="186" width="3" height="4" fill="#000000" />
<rect x="840.5" y="199.5" width="3" height="4" fill="#000000" />
<rect x="846.5" y="186" width="3" height="4" fill="#000000" />
<rect x="846.5" y="199.5" width="3" height="4" fill="#000000" />
<rect x="843.5" y="186" width="2" height="4" fill="#000000" />
<rect x="843.5" y="199.5" width="2" height="4" fill="#000000" />
<rect x="844" y="187" width="1" height="15" fill="#000000"/>
<rect x="849" y="187" width="44" height="1" fill="#000000"/>
<rect x="849" y="202" width="44" height="1" fill="#000000"/>
<rect x="892" y="186" width="6" height="5" fill="#000000" />
<rect x="892" y="199" width="6" height="5" fill="#000000" />
<rect x="893" y="187" width="4" height="16" fill="#000000" />
<rect x="898" y="187" width="-7" height="1" fill="#000000"/>
<rect x="898" y="202" width="-7" height="1" fill="#000000"/>
<rect x="198" y="229" width="121" height="1" fill="#000000"/>
<rect x="198" y="244" width="121" height="1" fill="#000000"/>
<rect x="318" y="228" width="5" height="5" fill="#000000" />
<rect x="318" y="241" width="5" height="5" fill="#000000" />
<rect x="319" y="229" width="3" height="16" fill="#000000" />
<rect x="323" y="229" width="152" height="1" fill="#000000"/>
<rect x="323" y="244" width="152" height="1" fill="#000000"/>
<path d="M475 229.5 L476.8 232.5 L476.8 241.5 L475 244.5 M480 229.5 L478.2 232.5 L478.2 241.5 L480 244.5" fill="none" stroke="#000" stroke-width="1.5" shape-rendering="geometricPrecision"/>
<rect x="474.5" y="228" width="3" height="4" fill="#000000" />
<rect x="474.5" y="241.5" width="3" height="4" fill="#000000" />
<rect x="477.5" y="228" width="3" height="4" fill="#000000" />
<rect x="477.5" y="241.5" width="3" height="4" fill="#000000" />
<rect x="480" y="229" width="154" height="1" fill="#000000"/>
<rect x="480" y="244" width="154" height="1" fill="#000000"/>
<path d="M634 229.5 L635.8 232.5 L635.8 241.5 L634 244.5 M639 229.5 L637.2 232.5 L637.2 241.5 L639 244.5" fill="none" stroke="#000" stroke-width="1.5" shape-rendering="geometricPrecision"/>
<rect x="633.5" y="228" width="3" height="4" fill="#000000" />
<rect x="633.5" y="241.5" width="3" height="4" fill="#000000" />
<rect x="636.5" y="228" width="3" height="4" fill="#000000" />
<rect x="636.5" y="241.5" width="3" height="4" fill="#000000" />
<rect x="639" y="229" width="154" height="1" fill="#000000"/>
<rect x="639" y="244" width="154" height="1" fill="#000000"/>
<path d="M793 229.5 L794.8 232.5 L794.8 241.5 L793 244.5 M798 229.5 L796.2 232.5 L796.2 241.5 L798 244.5" fill="none" stroke="#000" stroke-width="1.5" shape-rendering="geometricPrecision"/>
<rect x="792.5" y="228" width="3" height="4" fill="#000000" />
<rect x="792.5" y="241.5" width="3" height="4" fill="#000000" />
<rect x="795.5" y="228" width="3" height="4" fill="#000000" />
<rect x="795.5" y="241.5" width="3" height="4" fill="#000000" />
<rect x="798" y="229" width="100" height="1" fill="#000000"/>
<rect x="798" y="244" width="100" height="1" fill="#000000"/>
</g>
<clipPath id="wclip"><rect x="197" y="101" width="703" height="265"/></clipPath>
<text x="199.5" y="178.3" font-family="Liberation Mono" font-size="12.2" fill="#1a1a1a" text-anchor="start" font-weight="normal" textLength="23.8" lengthAdjust="spacingAndGlyphs" clip-path="url(#wclip)" stroke="#1a1a1a" stroke-width="0.12">0000</text>
<text x="403.5" y="178.3" font-family="Liberation Mono" font-size="12.2" fill="#1a1a1a" text-anchor="start" font-weight="normal" textLength="23.8" lengthAdjust="spacingAndGlyphs" clip-path="url(#wclip)" stroke="#1a1a1a" stroke-width="0.12">0011</text>
<text x="453.5" y="178.3" font-family="Liberation Mono" font-size="12.2" fill="#1a1a1a" text-anchor="start" font-weight="normal" textLength="23.8" lengthAdjust="spacingAndGlyphs" clip-path="url(#wclip)" stroke="#1a1a1a" stroke-width="0.12">0000</text>
<text x="563" y="178.3" font-family="Liberation Mono" font-size="12.2" fill="#1a1a1a" text-anchor="start" font-weight="normal" textLength="23.8" lengthAdjust="spacingAndGlyphs" clip-path="url(#wclip)" stroke="#1a1a1a" stroke-width="0.12">0022</text>
<text x="612.5" y="178.3" font-family="Liberation Mono" font-size="12.2" fill="#1a1a1a" text-anchor="start" font-weight="normal" textLength="23.8" lengthAdjust="spacingAndGlyphs" clip-path="url(#wclip)" stroke="#1a1a1a" stroke-width="0.12">0000</text>
<text x="721.5" y="178.3" font-family="Liberation Mono" font-size="12.2" fill="#1a1a1a" text-anchor="start" font-weight="normal" textLength="23.8" lengthAdjust="spacingAndGlyphs" clip-path="url(#wclip)" stroke="#1a1a1a" stroke-width="0.12">0033</text>
<text x="771" y="178.3" font-family="Liberation Mono" font-size="12.2" fill="#1a1a1a" text-anchor="start" font-weight="normal" textLength="23.8" lengthAdjust="spacingAndGlyphs" clip-path="url(#wclip)" stroke="#1a1a1a" stroke-width="0.12">0000</text>
<text x="880.5" y="178.3" font-family="Liberation Mono" font-size="12.2" fill="#1a1a1a" text-anchor="start" font-weight="normal" textLength="23.8" lengthAdjust="spacingAndGlyphs" clip-path="url(#wclip)" stroke="#1a1a1a" stroke-width="0.12">0044</text>
<text x="199.5" y="199.3" font-family="Liberation Mono" font-size="12.2" fill="#1a1a1a" text-anchor="start" font-weight="normal" textLength="23.8" lengthAdjust="spacingAndGlyphs" clip-path="url(#wclip)" stroke="#1a1a1a" stroke-width="0.12">0001</text>
<text x="421" y="199.3" font-family="Liberation Mono" font-size="12.2" fill="#1a1a1a" text-anchor="start" font-weight="normal" textLength="23.8" lengthAdjust="spacingAndGlyphs" clip-path="url(#wclip)" stroke="#1a1a1a" stroke-width="0.12">0002</text>
<text x="531" y="199.3" font-family="Liberation Mono" font-size="12.2" fill="#1a1a1a" text-anchor="start" font-weight="normal" textLength="23.8" lengthAdjust="spacingAndGlyphs" clip-path="url(#wclip)" stroke="#1a1a1a" stroke-width="0.12">0001</text>
<text x="579.5" y="199.3" font-family="Liberation Mono" font-size="12.2" fill="#1a1a1a" text-anchor="start" font-weight="normal" textLength="23.8" lengthAdjust="spacingAndGlyphs" clip-path="url(#wclip)" stroke="#1a1a1a" stroke-width="0.12">0004</text>
<text x="689.5" y="199.3" font-family="Liberation Mono" font-size="12.2" fill="#1a1a1a" text-anchor="start" font-weight="normal" textLength="23.8" lengthAdjust="spacingAndGlyphs" clip-path="url(#wclip)" stroke="#1a1a1a" stroke-width="0.12">0001</text>
<text x="738.5" y="199.3" font-family="Liberation Mono" font-size="12.2" fill="#1a1a1a" text-anchor="start" font-weight="normal" textLength="23.8" lengthAdjust="spacingAndGlyphs" clip-path="url(#wclip)" stroke="#1a1a1a" stroke-width="0.12">0008</text>
<text x="849.5" y="199.3" font-family="Liberation Mono" font-size="12.2" fill="#1a1a1a" text-anchor="start" font-weight="normal" textLength="23.8" lengthAdjust="spacingAndGlyphs" clip-path="url(#wclip)" stroke="#1a1a1a" stroke-width="0.12">0001</text>
<text x="199.5" y="241.3" font-family="Liberation Mono" font-size="12.2" fill="#1a1a1a" text-anchor="start" font-weight="normal" textLength="23.8" lengthAdjust="spacingAndGlyphs" clip-path="url(#wclip)" stroke="#1a1a1a" stroke-width="0.12">FFFF</text>
<text x="322.5" y="241.3" font-family="Liberation Mono" font-size="12.2" fill="#1a1a1a" text-anchor="start" font-weight="normal" textLength="23.8" lengthAdjust="spacingAndGlyphs" clip-path="url(#wclip)" stroke="#1a1a1a" stroke-width="0.12">1A87</text>
<text x="480" y="241.3" font-family="Liberation Mono" font-size="12.2" fill="#1a1a1a" text-anchor="start" font-weight="normal" textLength="23.8" lengthAdjust="spacingAndGlyphs" clip-path="url(#wclip)" stroke="#1a1a1a" stroke-width="0.12">9BB4</text>
<text x="639" y="241.3" font-family="Liberation Mono" font-size="12.2" fill="#1a1a1a" text-anchor="start" font-weight="normal" textLength="23.8" lengthAdjust="spacingAndGlyphs" clip-path="url(#wclip)" stroke="#1a1a1a" stroke-width="0.12">B835</text>
<text x="798.5" y="241.3" font-family="Liberation Mono" font-size="12.2" fill="#1a1a1a" text-anchor="start" font-weight="normal" textLength="23.8" lengthAdjust="spacingAndGlyphs" clip-path="url(#wclip)" stroke="#1a1a1a" stroke-width="0.12">22F4</text>
<rect x="0" y="397" width="922" height="607" fill="#f2f1f0" />
<rect x="0" y="397" width="922" height="3" fill="#505050" />
<rect x="0" y="397" width="922" height="1" fill="#2c2c2c"/>
<rect x="0" y="400" width="916" height="16" fill="#7e7e7e" />
<rect x="916" y="397" width="4" height="607" fill="#383838" />
<rect x="920" y="397" width="2" height="607" fill="#7a5534" />
<text x="25" y="411" font-family="Liberation Sans" font-size="12.5" fill="#ececec" text-anchor="start" font-weight="normal" textLength="22.8" lengthAdjust="spacingAndGlyphs" >gaw</text>
<rect x="873.3" y="402.8" width="12.7" height="13.2" fill="#c2c2c2" />
<rect x="888" y="402.8" width="13.2" height="13.2" fill="#c2c2c2" />
<rect x="903" y="402.8" width="13" height="13.2" fill="#c2c2c2" />
<rect x="877" y="411.8" width="7" height="2.3" fill="#000" />
<rect x="891.6" y="405.4" width="8" height="8" fill="none" stroke="#000" stroke-width="1.5"/>
<path d="M906.5 405.5l6.5 7 M913 405.5l-6.5 7" stroke="#000" stroke-width="1.5"/>
<text x="10.6" y="435" font-family="Liberation Sans" font-size="13" fill="#3c3c3c" text-anchor="start" font-weight="normal" textLength="20.0" lengthAdjust="spacingAndGlyphs" >File</text>
<text x="45.5" y="435" font-family="Liberation Sans" font-size="13" fill="#3c3c3c" text-anchor="start" font-weight="normal" textLength="28.2" lengthAdjust="spacingAndGlyphs" >View</text>
<text x="89.7" y="435" font-family="Liberation Sans" font-size="13" fill="#3c3c3c" text-anchor="start" font-weight="normal" textLength="33.9" lengthAdjust="spacingAndGlyphs" >Zoom</text>
<text x="139.6" y="435" font-family="Liberation Sans" font-size="13" fill="#3c3c3c" text-anchor="start" font-weight="normal" textLength="45.6" lengthAdjust="spacingAndGlyphs" >Cursors</text>
<text x="200.6" y="435" font-family="Liberation Sans" font-size="13" fill="#3c3c3c" text-anchor="start" font-weight="normal" textLength="71.0" lengthAdjust="spacingAndGlyphs" >Preferences</text>
<text x="286.7" y="435" font-family="Liberation Sans" font-size="13" fill="#3c3c3c" text-anchor="start" font-weight="normal" textLength="28.6" lengthAdjust="spacingAndGlyphs" >Tools</text>
<text x="330.79999999999995" y="435" font-family="Liberation Sans" font-size="13" fill="#3c3c3c" text-anchor="start" font-weight="normal" textLength="26.9" lengthAdjust="spacingAndGlyphs" >Help</text>
<rect x="4" y="442" width="909" height="1" fill="#dcdad6"/>
<path d="M49.8 455.7h6.6v5h4.5v6.5h-4.5v4.9h-6.6v-4.9h-4.8v-6.5h4.8z" fill="url(#grn)" stroke="#3b8a14" stroke-width="0.8"/>
<path d="M150.5 453.5 C152 454 152 456 151 457.5 L148.6 461 L146.8 460 L149 456 C149.3 454.8 149.6 453.6 150.5 453.5z" fill="#b8802e" stroke="#8a5a18" stroke-width="0.5"/>
<path d="M144 460 L151.2 462.8 L150.5 464 L143.3 461.2z" fill="#e6d030"/>
<path d="M143.5 461.5 L150.5 464 L150 472.5 L148.5 474 L141 472 L136 469.5 z" fill="#f4e050" stroke="#d6c020" stroke-width="0.6"/>
<path d="M143.3 461.5 L150.6 464.2" stroke="#e4d8ec" stroke-width="1.3"/>
<path d="M225.2 452.3h11.1l6.5 6.3v16.2h-17.6z" fill="url(#pg)" stroke="#cfcfcf" stroke-width="0.7"/>
<path d="M236.3 452.3v6.3h6.5" fill="#eaeaea" stroke="#c8c8c8" stroke-width="0.5"/>
<g transform="translate(0,0)"><path d="M228.6 455 L229.8 455.3 L235.8 465.2 L234.8 466.2z" fill="#4a4a4a" stroke="#222" stroke-width="0.4"/><path d="M234 453.8 L235.1 454 L235.3 466 L234.1 467.8z" fill="#8a8a8a" stroke="#222" stroke-width="0.4"/><path d="M235.3 465.6 L237.8 468.6 M234.6 466.5 L233.6 469.6" stroke="#111" stroke-width="1.3" fill="none"/><ellipse cx="233.1" cy="472.2" rx="1.6" ry="2.5" fill="none" stroke="#111" stroke-width="1.3"/><ellipse cx="239.5" cy="469.3" rx="2" ry="1.6" fill="none" stroke="#111" stroke-width="1.3"/></g>
<g transform="translate(0,0)"><ellipse cx="325" cy="473.8" rx="7" ry="1.6" fill="#9aa8b8" fill-opacity="0.35"/><circle cx="325" cy="463.7" r="9.8" fill="url(#org)"/><path d="M323.5 460 L324.6 457.4 L327.5 460.3 L330.5 459.6 L330.8 466.2 L325.8 465.6 L328 463.2z" fill="#f8d6a8" fill-opacity="0.85"/><path d="M318.8 460.8 L325 460.9 L323 463 L328.8 467.9 L327.3 469.5 L321.5 464.5 L319.2 467.2z" fill="#f4f4f4"/></g>
<rect x="397.8" y="453.6" width="17.2" height="20.5" rx="1.5" fill="#7e6244"/>
<path d="M399.5 455h10.5l3.5 3.5v14h-14z" fill="url(#pg)"/>
<path d="M410 455l3.5 3.5h-3.5z" fill="#7e6244"/>
<g stroke="#9aa0a8" stroke-width="1"><path d="M397 456.5h3 M397 458.5h3 M397 460.5h3 M397 462.5h3 M397 464.5h3 M397 466.5h3 M397 468.5h3 M397 470.5h3"/></g>
<path d="M415 457.5 L406 474" stroke="#e8b020" stroke-width="2.2"/><path d="M414.6 457 L415.8 455.5" stroke="#f08070" stroke-width="2"/>
<rect x="469.7" y="455.5" width="16.8" height="16.8" rx="3" fill="url(#btn)" stroke="#6d6d6d" stroke-width="1"/>
<rect x="540.7" y="455.5" width="16.8" height="16.8" rx="3" fill="url(#btn)" stroke="#6d6d6d" stroke-width="1"/>
<rect x="692.8" y="455.5" width="16.8" height="16.8" rx="3" fill="url(#btn)" stroke="#6d6d6d" stroke-width="1"/>
<rect x="774.8" y="455.5" width="16.8" height="16.8" rx="3" fill="url(#btn)" stroke="#6d6d6d" stroke-width="1"/>
<path d="M475.6 458.8h3.6v3.4h3.4v3.6h-3.4v3.4h-3.6v-3.4h-3.4v-3.6h3.4z" fill="#f4f4f4" stroke="#555" stroke-width="1"/>
<rect x="543.8" y="462.2" width="10" height="3.6" fill="#f4f4f4" stroke="#555" stroke-width="1"/>
<g stroke="#555" stroke-width="1.3" fill="none"><path d="M695.9 461v-2.2h2.8 M703.4 458.8h2.8v2.2 M706.2 466.8v2.3h-2.8 M698.7 469.1h-2.8v-2.3"/></g>
<path d="M780.7 460.8 L783.8 458.8 H785.8 V468.8 H782.8 V462.3 L781.2 463.2z" fill="#fff" stroke="#666" stroke-width="0.9"/>
<rect x="611.3" y="452.6" width="17.3" height="22.4" rx="0.8" fill="url(#pg)" stroke="#c4c4c4" stroke-width="0.7"/>
<g stroke="#9a9a9a" stroke-width="0.8"><path d="M614.5 458.5h11.5 M615 461.5h10 M615.2 464h9 M614.5 466.5h11.5 M616 469.3h7.5"/></g>
<text x="23.5" y="492" font-family="Liberation Sans" font-size="13" fill="#3c3c3c" text-anchor="start" font-weight="normal" textLength="59.8" lengthAdjust="spacingAndGlyphs" >Add Panel</text>
<text x="117.9" y="492" font-family="Liberation Sans" font-size="13" fill="#3c3c3c" text-anchor="start" font-weight="normal" textLength="55.0" lengthAdjust="spacingAndGlyphs" >Del Panel</text>
<text x="206.70000000000002" y="492" font-family="Liberation Sans" font-size="13" fill="#3c3c3c" text-anchor="start" font-weight="normal" textLength="55.9" lengthAdjust="spacingAndGlyphs" >Del Wave</text>
<text x="297.0" y="492" font-family="Liberation Sans" font-size="13" fill="#3c3c3c" text-anchor="start" font-weight="normal" textLength="57.6" lengthAdjust="spacingAndGlyphs" >Reload All</text>
<text x="394.4" y="492" font-family="Liberation Sans" font-size="13" fill="#3c3c3c" text-anchor="start" font-weight="normal" textLength="24.8" lengthAdjust="spacingAndGlyphs" >Text</text>
<text x="465.4" y="492" font-family="Liberation Sans" font-size="13" fill="#3c3c3c" text-anchor="start" font-weight="normal" textLength="24.2" lengthAdjust="spacingAndGlyphs" >Z In</text>
<text x="531.8" y="492" font-family="Liberation Sans" font-size="13" fill="#3c3c3c" text-anchor="start" font-weight="normal" textLength="34.3" lengthAdjust="spacingAndGlyphs" >Z Out</text>
<text x="605.4" y="492" font-family="Liberation Sans" font-size="13" fill="#3c3c3c" text-anchor="start" font-weight="normal" textLength="28.2" lengthAdjust="spacingAndGlyphs" >Z C0</text>
<text x="672.1999999999999" y="492" font-family="Liberation Sans" font-size="13" fill="#3c3c3c" text-anchor="start" font-weight="normal" textLength="58.0" lengthAdjust="spacingAndGlyphs" >Z Cursors</text>
<text x="764.5" y="492" font-family="Liberation Sans" font-size="13" fill="#3c3c3c" text-anchor="start" font-weight="normal" textLength="36.7" lengthAdjust="spacingAndGlyphs" >X unZ</text>
<rect x="746.1" y="505.3" width="53.1" height="23.3" rx="4" fill="#3a3a3a"/>
<rect x="802" y="505.3" width="53.5" height="23.3" rx="4" fill="#3a3a3a"/>
<rect x="858.3" y="505.3" width="53.1" height="23.3" rx="4" fill="#3a3a3a"/>
<text x="752.6" y="521.6" font-family="Liberation Sans" font-size="13" fill="#f2f2f2" text-anchor="start" font-weight="normal" textLength="43.8" lengthAdjust="spacingAndGlyphs" stroke="#f2f2f2" stroke-width="0.5">124.5n</text>
<text x="808.4" y="521.6" font-family="Liberation Sans" font-size="13" fill="#ecec30" text-anchor="start" font-weight="normal" textLength="44.0" lengthAdjust="spacingAndGlyphs" stroke="#ecec30" stroke-width="0.5">194.5n</text>
<text x="864.5" y="521.6" font-family="Liberation Sans" font-size="13" fill="#30ea30" text-anchor="start" font-weight="normal" textLength="43.8" lengthAdjust="spacingAndGlyphs" stroke="#30ea30" stroke-width="0.5">69.95n</text>
<rect x="3" y="530" width="910" height="417" fill="#e4e1dc" />
<rect x="4" y="531" width="908" height="415" fill="#f4f3f1" />
<rect x="194" y="530" width="719" height="417" fill="#c9c6c1" />
<rect x="194" y="531" width="718" height="415" fill="#ffffff" />
<rect x="194" y="531" width="1" height="415" fill="#e2e2de"/>
<rect x="195" y="634" width="717" height="1" fill="#f1f1ef"/>
<rect x="195" y="738" width="717" height="1" fill="#f1f1ef"/>
<rect x="195" y="842" width="717" height="1" fill="#f1f1ef"/>
<g fill="#d3d5d0"><rect x="195" y="613.5" width="716" height="1.4"/><rect x="195" y="597.9" width="716" height="1.4"/><rect x="195" y="582.2" width="716" height="1.4"/><rect x="195" y="566.5" width="716" height="1.4"/><rect x="195" y="550.9" width="716" height="1.4"/><rect x="195" y="535.2" width="716" height="1.4"/><rect x="230.1" y="532" width="1.4" height="101"/><rect x="267.5" y="532" width="1.4" height="101"/><rect x="304.9" y="532" width="1.4" height="101"/><rect x="342.3" y="532" width="1.4" height="101"/><rect x="379.7" y="532" width="1.4" height="101"/><rect x="417.1" y="532" width="1.4" height="101"/><rect x="454.4" y="532" width="1.4" height="101"/><rect x="491.8" y="532" width="1.4" height="101"/><rect x="529.2" y="532" width="1.4" height="101"/><rect x="566.6" y="532" width="1.4" height="101"/><rect x="604.0" y="532" width="1.4" height="101"/><rect x="641.4" y="532" width="1.4" height="101"/><rect x="678.8" y="532" width="1.4" height="101"/><rect x="716.2" y="532" width="1.4" height="101"/><rect x="753.6" y="532" width="1.4" height="101"/><rect x="791.0" y="532" width="1.4" height="101"/><rect x="828.3" y="532" width="1.4" height="101"/><rect x="865.7" y="532" width="1.4" height="101"/><rect x="903.1" y="532" width="1.4" height="101"/></g>
<g fill="#d3d5d0"><rect x="195" y="718.3" width="716" height="1.4"/><rect x="195" y="702.4" width="716" height="1.4"/><rect x="195" y="686.4" width="716" height="1.4"/><rect x="195" y="670.4" width="716" height="1.4"/><rect x="195" y="654.5" width="716" height="1.4"/><rect x="195" y="638.5" width="716" height="1.4"/><rect x="230.1" y="636" width="1.4" height="101"/><rect x="267.5" y="636" width="1.4" height="101"/><rect x="304.9" y="636" width="1.4" height="101"/><rect x="342.3" y="636" width="1.4" height="101"/><rect x="379.7" y="636" width="1.4" height="101"/><rect x="417.1" y="636" width="1.4" height="101"/><rect x="454.4" y="636" width="1.4" height="101"/><rect x="491.8" y="636" width="1.4" height="101"/><rect x="529.2" y="636" width="1.4" height="101"/><rect x="566.6" y="636" width="1.4" height="101"/><rect x="604.0" y="636" width="1.4" height="101"/><rect x="641.4" y="636" width="1.4" height="101"/><rect x="678.8" y="636" width="1.4" height="101"/><rect x="716.2" y="636" width="1.4" height="101"/><rect x="753.6" y="636" width="1.4" height="101"/><rect x="791.0" y="636" width="1.4" height="101"/><rect x="828.3" y="636" width="1.4" height="101"/><rect x="865.7" y="636" width="1.4" height="101"/><rect x="903.1" y="636" width="1.4" height="101"/></g>
<g fill="#d3d5d0"><rect x="195" y="827.4" width="716" height="1.4"/><rect x="195" y="816.9" width="716" height="1.4"/><rect x="195" y="806.4" width="716" height="1.4"/><rect x="195" y="795.9" width="716" height="1.4"/><rect x="195" y="785.4" width="716" height="1.4"/><rect x="195" y="774.9" width="716" height="1.4"/><rect x="195" y="764.4" width="716" height="1.4"/><rect x="195" y="753.9" width="716" height="1.4"/><rect x="195" y="743.4" width="716" height="1.4"/><rect x="230.1" y="740" width="1.4" height="101"/><rect x="267.5" y="740" width="1.4" height="101"/><rect x="304.9" y="740" width="1.4" height="101"/><rect x="342.3" y="740" width="1.4" height="101"/><rect x="379.7" y="740" width="1.4" height="101"/><rect x="417.1" y="740" width="1.4" height="101"/><rect x="454.4" y="740" width="1.4" height="101"/><rect x="491.8" y="740" width="1.4" height="101"/><rect x="529.2" y="740" width="1.4" height="101"/><rect x="566.6" y="740" width="1.4" height="101"/><rect x="604.0" y="740" width="1.4" height="101"/><rect x="641.4" y="740" width="1.4" height="101"/><rect x="678.8" y="740" width="1.4" height="101"/><rect x="716.2" y="740" width="1.4" height="101"/><rect x="753.6" y="740" width="1.4" height="101"/><rect x="791.0" y="740" width="1.4" height="101"/><rect x="828.3" y="740" width="1.4" height="101"/><rect x="865.7" y="740" width="1.4" height="101"/><rect x="903.1" y="740" width="1.4" height="101"/></g>
<g fill="#d3d5d0"><rect x="195" y="923.3" width="716" height="1.4"/><rect x="195" y="908.3" width="716" height="1.4"/><rect x="195" y="893.3" width="716" height="1.4"/><rect x="195" y="878.3" width="716" height="1.4"/><rect x="195" y="863.3" width="716" height="1.4"/><rect x="195" y="848.3" width="716" height="1.4"/><rect x="230.1" y="844" width="1.4" height="101"/><rect x="267.5" y="844" width="1.4" height="101"/><rect x="304.9" y="844" width="1.4" height="101"/><rect x="342.3" y="844" width="1.4" height="101"/><rect x="379.7" y="844" width="1.4" height="101"/><rect x="417.1" y="844" width="1.4" height="101"/><rect x="454.4" y="844" width="1.4" height="101"/><rect x="491.8" y="844" width="1.4" height="101"/><rect x="529.2" y="844" width="1.4" height="101"/><rect x="566.6" y="844" width="1.4" height="101"/><rect x="604.0" y="844" width="1.4" height="101"/><rect x="641.4" y="844" width="1.4" height="101"/><rect x="678.8" y="844" width="1.4" height="101"/><rect x="716.2" y="844" width="1.4" height="101"/><rect x="753.6" y="844" width="1.4" height="101"/><rect x="791.0" y="844" width="1.4" height="101"/><rect x="828.3" y="844" width="1.4" height="101"/><rect x="865.7" y="844" width="1.4" height="101"/><rect x="903.1" y="844" width="1.4" height="101"/></g>
<text x="156.2" y="545" font-family="Liberation Sans" font-size="13" fill="#3c3c3c" text-anchor="start" font-weight="normal" textLength="18.6" lengthAdjust="spacingAndGlyphs" >1.5</text>
<text x="156.2" y="569" font-family="Liberation Sans" font-size="13" fill="#3c3c3c" text-anchor="start" font-weight="normal" textLength="6.0" lengthAdjust="spacingAndGlyphs" >1</text>
<text x="156.2" y="600.5" font-family="Liberation Sans" font-size="13" fill="#3c3c3c" text-anchor="start" font-weight="normal" textLength="18.6" lengthAdjust="spacingAndGlyphs" >0.5</text>
<text x="156.2" y="631.7" font-family="Liberation Sans" font-size="13" fill="#3c3c3c" text-anchor="start" font-weight="normal" textLength="7.6" lengthAdjust="spacingAndGlyphs" >0</text>
<text x="156.2" y="648.5" font-family="Liberation Sans" font-size="13" fill="#3c3c3c" text-anchor="start" font-weight="normal" textLength="18.6" lengthAdjust="spacingAndGlyphs" >1.5</text>
<text x="156.2" y="673.4" font-family="Liberation Sans" font-size="13" fill="#3c3c3c" text-anchor="start" font-weight="normal" textLength="6.0" lengthAdjust="spacingAndGlyphs" >1</text>
<text x="156.2" y="705.3" font-family="Liberation Sans" font-size="13" fill="#3c3c3c" text-anchor="start" font-weight="normal" textLength="18.6" lengthAdjust="spacingAndGlyphs" >0.5</text>
<text x="156.2" y="736.3" font-family="Liberation Sans" font-size="13" fill="#3c3c3c" text-anchor="start" font-weight="normal" textLength="7.6" lengthAdjust="spacingAndGlyphs" >0</text>
<text x="156.2" y="756.5" font-family="Liberation Sans" font-size="13" fill="#3c3c3c" text-anchor="start" font-weight="normal" textLength="18.6" lengthAdjust="spacingAndGlyphs" >0.8</text>
<text x="156.2" y="777.8" font-family="Liberation Sans" font-size="13" fill="#3c3c3c" text-anchor="start" font-weight="normal" textLength="18.6" lengthAdjust="spacingAndGlyphs" >0.6</text>
<text x="156.2" y="798.8" font-family="Liberation Sans" font-size="13" fill="#3c3c3c" text-anchor="start" font-weight="normal" textLength="18.6" lengthAdjust="spacingAndGlyphs" >0.4</text>
<text x="156.2" y="819.9" font-family="Liberation Sans" font-size="13" fill="#3c3c3c" text-anchor="start" font-weight="normal" textLength="18.6" lengthAdjust="spacingAndGlyphs" >0.2</text>
<text x="156.2" y="840.2" font-family="Liberation Sans" font-size="13" fill="#3c3c3c" text-anchor="start" font-weight="normal" textLength="7.6" lengthAdjust="spacingAndGlyphs" >0</text>
<text x="156.2" y="858.5" font-family="Liberation Sans" font-size="13" fill="#3c3c3c" text-anchor="start" font-weight="normal" textLength="18.6" lengthAdjust="spacingAndGlyphs" >1.5</text>
<text x="156.2" y="881" font-family="Liberation Sans" font-size="13" fill="#3c3c3c" text-anchor="start" font-weight="normal" textLength="6.0" lengthAdjust="spacingAndGlyphs" >1</text>
<text x="156.2" y="911.4" font-family="Liberation Sans" font-size="13" fill="#3c3c3c" text-anchor="start" font-weight="normal" textLength="18.6" lengthAdjust="spacingAndGlyphs" >0.5</text>
<text x="156.2" y="940.2" font-family="Liberation Sans" font-size="13" fill="#3c3c3c" text-anchor="start" font-weight="normal" textLength="7.6" lengthAdjust="spacingAndGlyphs" >0</text>
<clipPath id="lclip"><rect x="0" y="520" width="151.8" height="430"/></clipPath>
<g clip-path="url(#lclip)">
<rect x="4.8" y="532.0" width="85.2" height="23.4" rx="4.5" fill="#000"/>
<rect x="92.6" y="532.0" width="53.2" height="23.4" rx="4.5" fill="#3a3a3a"/>
<rect x="148.2" y="532.0" width="40" height="23.4" rx="4.5" fill="#3a3a3a"/>
<text x="8.1" y="548.4" font-family="Liberation Sans" font-size="12.6" fill="#ff2a2a" text-anchor="start" font-weight="normal" textLength="78.8" lengthAdjust="spacingAndGlyphs" >0: v(ldprech)</text>
<text x="98.7" y="548.4" font-family="Liberation Sans" font-size="12.8" fill="#f4f4f4" text-anchor="start" font-weight="normal" textLength="43.9" lengthAdjust="spacingAndGlyphs" stroke="#f4f4f4" stroke-width="0.3">13.74n</text>
<rect x="4.8" y="558.2" width="85.2" height="23.4" rx="4.5" fill="#000"/>
<rect x="92.6" y="558.2" width="53.2" height="23.4" rx="4.5" fill="#3a3a3a"/>
<rect x="148.2" y="558.2" width="40" height="23.4" rx="4.5" fill="#3a3a3a"/>
<text x="17.799999999999997" y="574.6" font-family="Liberation Sans" font-size="12.6" fill="#6f7dff" text-anchor="start" font-weight="normal" textLength="59.2" lengthAdjust="spacingAndGlyphs" >0: v(ldcp)</text>
<text x="108.4" y="574.6" font-family="Liberation Sans" font-size="12.8" fill="#f4f4f4" text-anchor="start" font-weight="normal" textLength="20.6" lengthAdjust="spacingAndGlyphs" stroke="#f4f4f4" stroke-width="0.3">0.0</text>
<rect x="4.8" y="636.0" width="80.9" height="23.4" rx="4.5" fill="#000"/>
<rect x="88.5" y="636.0" width="53.1" height="23.4" rx="4.5" fill="#3a3a3a"/>
<rect x="144.2" y="636.0" width="40" height="23.4" rx="4.5" fill="#3a3a3a"/>
<text x="8.1" y="652.4" font-family="Liberation Sans" font-size="12.6" fill="#a092bc" text-anchor="start" font-weight="normal" textLength="74.5" lengthAdjust="spacingAndGlyphs" >0: v(ldwl[3])</text>
<text x="94.80000000000001" y="652.4" font-family="Liberation Sans" font-size="12.8" fill="#f4f4f4" text-anchor="start" font-weight="normal" textLength="44.0" lengthAdjust="spacingAndGlyphs" stroke="#f4f4f4" stroke-width="0.3">19.55n</text>
<rect x="4.8" y="662.05" width="80.9" height="23.4" rx="4.5" fill="#000"/>
<rect x="88.5" y="662.05" width="53.1" height="23.4" rx="4.5" fill="#3a3a3a"/>
<rect x="144.2" y="662.05" width="40" height="23.4" rx="4.5" fill="#3a3a3a"/>
<text x="8.1" y="678.4499999999999" font-family="Liberation Sans" font-size="12.6" fill="#2ee22e" text-anchor="start" font-weight="normal" textLength="74.5" lengthAdjust="spacingAndGlyphs" >0: v(ldwl[2])</text>
<text x="94.80000000000001" y="678.4499999999999" font-family="Liberation Sans" font-size="12.8" fill="#f4f4f4" text-anchor="start" font-weight="normal" textLength="44.0" lengthAdjust="spacingAndGlyphs" stroke="#f4f4f4" stroke-width="0.3">19.55n</text>
<text x="148.5" y="678.4499999999999" font-family="Liberation Sans" font-size="12.8" fill="#ecec30" text-anchor="start" font-weight="normal" textLength="6" lengthAdjust="spacingAndGlyphs" stroke="#ecec30" stroke-width="0.3">-</text>
<rect x="4.8" y="688.1" width="80.9" height="23.4" rx="4.5" fill="#000"/>
<rect x="88.5" y="688.1" width="53.1" height="23.4" rx="4.5" fill="#3a3a3a"/>
<rect x="144.2" y="688.1" width="40" height="23.4" rx="4.5" fill="#3a3a3a"/>
<text x="8.1" y="704.5" font-family="Liberation Sans" font-size="12.6" fill="#ff2a2a" text-anchor="start" font-weight="normal" textLength="74.5" lengthAdjust="spacingAndGlyphs" >0: v(ldwl[1])</text>
<text x="94.80000000000001" y="704.5" font-family="Liberation Sans" font-size="12.8" fill="#f4f4f4" text-anchor="start" font-weight="normal" textLength="44.0" lengthAdjust="spacingAndGlyphs" stroke="#f4f4f4" stroke-width="0.3">19.55n</text>
<text x="148.5" y="704.5" font-family="Liberation Sans" font-size="12.8" fill="#ecec30" text-anchor="start" font-weight="normal" textLength="6" lengthAdjust="spacingAndGlyphs" stroke="#ecec30" stroke-width="0.3">-</text>
<rect x="4.8" y="714.15" width="80.9" height="23.4" rx="4.5" fill="#000"/>
<rect x="88.5" y="714.15" width="53.1" height="23.4" rx="4.5" fill="#3a3a3a"/>
<rect x="144.2" y="714.15" width="40" height="23.4" rx="4.5" fill="#3a3a3a"/>
<text x="8.1" y="730.55" font-family="Liberation Sans" font-size="12.6" fill="#6f7dff" text-anchor="start" font-weight="normal" textLength="74.5" lengthAdjust="spacingAndGlyphs" >0: v(ldwl[0])</text>
<text x="94.80000000000001" y="730.55" font-family="Liberation Sans" font-size="12.8" fill="#f4f4f4" text-anchor="start" font-weight="normal" textLength="44.0" lengthAdjust="spacingAndGlyphs" stroke="#f4f4f4" stroke-width="0.3">19.55n</text>
<text x="148.5" y="730.55" font-family="Liberation Sans" font-size="12.8" fill="#ecec30" text-anchor="start" font-weight="normal" textLength="6" lengthAdjust="spacingAndGlyphs" stroke="#ecec30" stroke-width="0.3">-</text>
<rect x="4.8" y="739.8" width="92.8" height="23.4" rx="4.5" fill="#000"/>
<rect x="100.2" y="739.8" width="79.8" height="23.4" rx="4.5" fill="#3a3a3a"/>
<text x="8.1" y="756.1999999999999" font-family="Liberation Sans" font-size="12.6" fill="#8c6e6e" text-anchor="start" font-weight="normal" textLength="86.9" lengthAdjust="spacingAndGlyphs" >0: v(ldyms[3])</text>
<text x="106.80000000000001" y="756.1999999999999" font-family="Liberation Sans" font-size="12.8" fill="#f4f4f4" text-anchor="start" font-weight="normal" textLength="43.5" lengthAdjust="spacingAndGlyphs" stroke="#f4f4f4" stroke-width="0.3">472.4n</text>
<rect x="4.8" y="765.8499999999999" width="92.8" height="23.4" rx="4.5" fill="#000"/>
<rect x="100.2" y="765.8499999999999" width="79.8" height="23.4" rx="4.5" fill="#3a3a3a"/>
<text x="8.1" y="782.2499999999999" font-family="Liberation Sans" font-size="12.6" fill="#2ee22e" text-anchor="start" font-weight="normal" textLength="86.9" lengthAdjust="spacingAndGlyphs" >0: v(ldyms[2])</text>
<text x="106.80000000000001" y="782.2499999999999" font-family="Liberation Sans" font-size="12.8" fill="#f4f4f4" text-anchor="start" font-weight="normal" textLength="43.5" lengthAdjust="spacingAndGlyphs" stroke="#f4f4f4" stroke-width="0.3">472.4n</text>
<rect x="4.8" y="791.9" width="92.8" height="23.4" rx="4.5" fill="#000"/>
<rect x="100.2" y="791.9" width="79.8" height="23.4" rx="4.5" fill="#3a3a3a"/>
<text x="8.1" y="808.3" font-family="Liberation Sans" font-size="12.6" fill="#ff2a2a" text-anchor="start" font-weight="normal" textLength="86.9" lengthAdjust="spacingAndGlyphs" >0: v(ldyms[1])</text>
<text x="106.80000000000001" y="808.3" font-family="Liberation Sans" font-size="12.8" fill="#f4f4f4" text-anchor="start" font-weight="normal" textLength="43.5" lengthAdjust="spacingAndGlyphs" stroke="#f4f4f4" stroke-width="0.3">472.4n</text>
<rect x="4.8" y="817.9499999999999" width="92.8" height="23.4" rx="4.5" fill="#000"/>
<rect x="100.2" y="817.9499999999999" width="79.8" height="23.4" rx="4.5" fill="#3a3a3a"/>
<text x="8.1" y="834.3499999999999" font-family="Liberation Sans" font-size="12.6" fill="#6f7dff" text-anchor="start" font-weight="normal" textLength="86.9" lengthAdjust="spacingAndGlyphs" >0: v(ldyms[0])</text>
<text x="106.80000000000001" y="834.3499999999999" font-family="Liberation Sans" font-size="12.8" fill="#f4f4f4" text-anchor="start" font-weight="normal" textLength="43.5" lengthAdjust="spacingAndGlyphs" stroke="#f4f4f4" stroke-width="0.3">472.4n</text>
<rect x="4.8" y="844.3" width="75.9" height="23.4" rx="4.5" fill="#000"/>
<rect x="83.5" y="844.3" width="48.8" height="23.4" rx="4.5" fill="#3a3a3a"/>
<rect x="135.4" y="844.3" width="40" height="23.4" rx="4.5" fill="#3a3a3a"/>
<text x="8.1" y="860.6999999999999" font-family="Liberation Sans" font-size="12.6" fill="#4a4a4a" text-anchor="start" font-weight="normal" textLength="69.5" lengthAdjust="spacingAndGlyphs" >0: v(ldq[3])</text>
<text x="90.10000000000001" y="860.6999999999999" font-family="Liberation Sans" font-size="12.8" fill="#f4f4f4" text-anchor="start" font-weight="normal" textLength="35.9" lengthAdjust="spacingAndGlyphs" stroke="#f4f4f4" stroke-width="0.3">1.500</text>
<text x="142.5" y="860.6999999999999" font-family="Liberation Sans" font-size="12.8" fill="#ecec30" text-anchor="start" font-weight="normal" textLength="12.5" lengthAdjust="spacingAndGlyphs" stroke="#ecec30" stroke-width="0.3">9.</text>
<rect x="4.8" y="870.3499999999999" width="75.9" height="23.4" rx="4.5" fill="#000"/>
<rect x="83.5" y="870.3499999999999" width="48.8" height="23.4" rx="4.5" fill="#3a3a3a"/>
<rect x="135.4" y="870.3499999999999" width="40" height="23.4" rx="4.5" fill="#3a3a3a"/>
<text x="8.1" y="886.7499999999999" font-family="Liberation Sans" font-size="12.6" fill="#2ee22e" text-anchor="start" font-weight="normal" textLength="69.5" lengthAdjust="spacingAndGlyphs" >0: v(ldq[2])</text>
<text x="90.10000000000001" y="886.7499999999999" font-family="Liberation Sans" font-size="12.8" fill="#f4f4f4" text-anchor="start" font-weight="normal" textLength="35.9" lengthAdjust="spacingAndGlyphs" stroke="#f4f4f4" stroke-width="0.3">1.500</text>
<text x="145" y="886.7499999999999" font-family="Liberation Sans" font-size="12.8" fill="#ecec30" text-anchor="start" font-weight="normal" textLength="7" lengthAdjust="spacingAndGlyphs" stroke="#ecec30" stroke-width="0.3">1</text>
<rect x="4.8" y="896.4" width="75.9" height="23.4" rx="4.5" fill="#000"/>
<rect x="83.5" y="896.4" width="48.8" height="23.4" rx="4.5" fill="#3a3a3a"/>
<rect x="135.4" y="896.4" width="40" height="23.4" rx="4.5" fill="#3a3a3a"/>
<text x="8.1" y="912.8" font-family="Liberation Sans" font-size="12.6" fill="#ff2a2a" text-anchor="start" font-weight="normal" textLength="69.5" lengthAdjust="spacingAndGlyphs" >0: v(ldq[1])</text>
<text x="90.10000000000001" y="912.8" font-family="Liberation Sans" font-size="12.8" fill="#f4f4f4" text-anchor="start" font-weight="normal" textLength="35.9" lengthAdjust="spacingAndGlyphs" stroke="#f4f4f4" stroke-width="0.3">1.500</text>
<text x="142.5" y="912.8" font-family="Liberation Sans" font-size="12.8" fill="#ecec30" text-anchor="start" font-weight="normal" textLength="12.5" lengthAdjust="spacingAndGlyphs" stroke="#ecec30" stroke-width="0.3">9.</text>
<rect x="4.8" y="922.4499999999999" width="75.9" height="23.4" rx="4.5" fill="#000"/>
<rect x="83.5" y="922.4499999999999" width="48.8" height="23.4" rx="4.5" fill="#3a3a3a"/>
<rect x="135.4" y="922.4499999999999" width="40" height="23.4" rx="4.5" fill="#3a3a3a"/>
<text x="8.1" y="938.8499999999999" font-family="Liberation Sans" font-size="12.6" fill="#6f7dff" text-anchor="start" font-weight="normal" textLength="69.5" lengthAdjust="spacingAndGlyphs" >0: v(ldq[0])</text>
<text x="90.10000000000001" y="938.8499999999999" font-family="Liberation Sans" font-size="12.8" fill="#f4f4f4" text-anchor="start" font-weight="normal" textLength="35.9" lengthAdjust="spacingAndGlyphs" stroke="#f4f4f4" stroke-width="0.3">1.500</text>
<text x="142.5" y="938.8499999999999" font-family="Liberation Sans" font-size="12.8" fill="#ecec30" text-anchor="start" font-weight="normal" textLength="12.5" lengthAdjust="spacingAndGlyphs" stroke="#ecec30" stroke-width="0.3">9.</text>
</g>
<clipPath id="pclip"><rect x="195" y="531" width="716" height="415"/></clipPath>
<g clip-path="url(#pclip)">
<rect x="379.6" y="531" width="1.2" height="415" fill="#e8e8e8"/>
<polyline points="195.00,629.90 217.00,629.90 217.80,601.50 218.60,629.90 911.00,629.90" fill="none" stroke="#ff2a2a" stroke-width="1.3" stroke-opacity="1.0" stroke-linejoin="round" />
<polyline points="195.00,629.90 391.00,629.90 392.40,536.90 393.10,535.50 394.10,535.40 395.00,537.10 396.70,629.90 414.93,629.90 416.33,536.90 417.03,535.50 418.03,535.40 418.93,537.10 420.63,629.90 438.86,629.90 440.26,536.90 440.96,535.50 441.96,535.40 442.86,537.10 444.56,629.90 462.79,629.90 464.19,536.90 464.89,535.50 465.89,535.40 466.79,537.10 468.49,629.90 486.72,629.90 488.12,536.90 488.82,535.50 489.82,535.40 490.72,537.10 492.42,629.90 510.65,629.90 512.05,536.90 512.75,535.50 513.75,535.40 514.65,537.10 516.35,629.90 534.58,629.90 535.98,536.90 536.68,535.50 537.68,535.40 538.58,537.10 540.28,629.90 558.51,629.90 559.91,536.90 560.61,535.50 561.61,535.40 562.51,537.10 564.21,629.90 582.44,629.90 583.84,536.90 584.54,535.50 585.54,535.40 586.44,537.10 588.14,629.90 606.37,629.90 607.77,536.90 608.47,535.50 609.47,535.40 610.37,537.10 612.07,629.90 630.30,629.90 631.70,536.90 632.40,535.50 633.40,535.40 634.30,537.10 636.00,629.90 654.23,629.90 655.63,536.90 656.33,535.50 657.33,535.40 658.23,537.10 659.93,629.90 678.16,629.90 679.56,536.90 680.26,535.50 681.26,535.40 682.16,537.10 683.86,629.90 702.09,629.90 703.49,536.90 704.19,535.50 705.19,535.40 706.09,537.10 707.79,629.90 726.02,629.90 727.42,536.90 728.12,535.50 729.12,535.40 730.02,537.10 731.72,629.90 749.95,629.90 751.35,536.90 752.05,535.50 753.05,535.40 753.95,537.10 755.65,629.90 911.00,629.90" fill="none" stroke="#ff2a2a" stroke-width="1.4" stroke-opacity="0.85" stroke-linejoin="round" />
<polyline points="195.00,629.90 390.40,629.90 392.00,535.90 402.50,535.90 404.60,629.90 414.33,629.90 415.93,535.90 426.43,535.90 428.53,629.90 438.26,629.90 439.86,535.90 450.36,535.90 452.46,629.90 462.19,629.90 463.79,535.90 474.29,535.90 476.39,629.90 486.12,629.90 487.72,535.90 498.22,535.90 500.32,629.90 510.05,629.90 511.65,535.90 522.15,535.90 524.25,629.90 533.98,629.90 535.58,535.90 546.08,535.90 548.18,629.90 557.91,629.90 559.51,535.90 570.01,535.90 572.11,629.90 581.84,629.90 583.44,535.90 593.94,535.90 596.04,629.90 605.77,629.90 607.37,535.90 617.87,535.90 619.97,629.90 629.70,629.90 631.30,535.90 641.80,535.90 643.90,629.90 653.63,629.90 655.23,535.90 665.73,535.90 667.83,629.90 677.56,629.90 679.16,535.90 689.66,535.90 691.76,629.90 701.49,629.90 703.09,535.90 713.59,535.90 715.69,629.90 725.42,629.90 727.02,535.90 737.52,535.90 739.62,629.90 749.35,629.90 750.95,535.90 761.45,535.90 763.55,629.90 773.28,629.90 774.88,535.90 785.38,535.90 787.48,629.90 911.00,629.90" fill="none" stroke="#5a74ff" stroke-width="1.5" stroke-opacity="0.85" stroke-linejoin="round" />
<polyline points="195.00,629.90 390.40,629.90" fill="none" stroke="#9258b0" stroke-width="1.7" stroke-opacity="1.0" stroke-linejoin="round" />
<polyline points="404.60,629.90 414.33,629.90" fill="none" stroke="#9258b0" stroke-width="1.7" stroke-opacity="1.0" stroke-linejoin="round" />
<polyline points="428.53,629.90 438.26,629.90" fill="none" stroke="#9258b0" stroke-width="1.7" stroke-opacity="1.0" stroke-linejoin="round" />
<polyline points="452.46,629.90 462.19,629.90" fill="none" stroke="#9258b0" stroke-width="1.7" stroke-opacity="1.0" stroke-linejoin="round" />
<polyline points="476.39,629.90 486.12,629.90" fill="none" stroke="#9258b0" stroke-width="1.7" stroke-opacity="1.0" stroke-linejoin="round" />
<polyline points="500.32,629.90 510.05,629.90" fill="none" stroke="#9258b0" stroke-width="1.7" stroke-opacity="1.0" stroke-linejoin="round" />
<polyline points="524.25,629.90 533.98,629.90" fill="none" stroke="#9258b0" stroke-width="1.7" stroke-opacity="1.0" stroke-linejoin="round" />
<polyline points="548.18,629.90 557.91,629.90" fill="none" stroke="#9258b0" stroke-width="1.7" stroke-opacity="1.0" stroke-linejoin="round" />
<polyline points="572.11,629.90 581.84,629.90" fill="none" stroke="#9258b0" stroke-width="1.7" stroke-opacity="1.0" stroke-linejoin="round" />
<polyline points="596.04,629.90 605.77,629.90" fill="none" stroke="#9258b0" stroke-width="1.7" stroke-opacity="1.0" stroke-linejoin="round" />
<polyline points="619.97,629.90 629.70,629.90" fill="none" stroke="#9258b0" stroke-width="1.7" stroke-opacity="1.0" stroke-linejoin="round" />
<polyline points="643.90,629.90 653.63,629.90" fill="none" stroke="#9258b0" stroke-width="1.7" stroke-opacity="1.0" stroke-linejoin="round" />
<polyline points="667.83,629.90 677.56,629.90" fill="none" stroke="#9258b0" stroke-width="1.7" stroke-opacity="1.0" stroke-linejoin="round" />
<polyline points="691.76,629.90 701.49,629.90" fill="none" stroke="#9258b0" stroke-width="1.7" stroke-opacity="1.0" stroke-linejoin="round" />
<polyline points="715.69,629.90 725.42,629.90" fill="none" stroke="#9258b0" stroke-width="1.7" stroke-opacity="1.0" stroke-linejoin="round" />
<polyline points="739.62,629.90 749.35,629.90" fill="none" stroke="#9258b0" stroke-width="1.7" stroke-opacity="1.0" stroke-linejoin="round" />
<polyline points="763.55,629.90 773.28,629.90" fill="none" stroke="#9258b0" stroke-width="1.7" stroke-opacity="1.0" stroke-linejoin="round" />
<polyline points="787.48,629.90 911.00,629.90" fill="none" stroke="#9258b0" stroke-width="1.7" stroke-opacity="1.0" stroke-linejoin="round" />
<polyline points="195.00,735.00 911.00,735.00" fill="none" stroke="#7a5a8e" stroke-width="2" stroke-opacity="1.0" stroke-linejoin="round" />
<polyline points="217.30,735.00 218.20,721.00 219.10,735.00" fill="none" stroke="#6f7dff" stroke-width="1.4" stroke-opacity="1.0" stroke-linejoin="round" />
<polyline points="389.00,735.00 392.00,735.00 393.60,641.20 394.60,639.20 406.90,639.20 408.30,641.20 410.50,735.00 413.00,735.00" fill="none" stroke="#6f7dff" stroke-width="1.3" stroke-opacity="1.0" stroke-linejoin="round" />
<polyline points="412.93,735.00 415.93,735.00 417.53,641.20 418.53,639.20 430.83,639.20 432.23,641.20 434.43,735.00 436.93,735.00" fill="none" stroke="#ff2a2a" stroke-width="1.3" stroke-opacity="1.0" stroke-linejoin="round" />
<polyline points="436.86,735.00 439.86,735.00 441.46,641.20 442.46,639.20 454.76,639.20 456.16,641.20 458.36,735.00 460.86,735.00" fill="none" stroke="#2ee22e" stroke-width="1.3" stroke-opacity="1.0" stroke-linejoin="round" />
<polyline points="460.79,735.00 463.79,735.00 465.39,641.20 466.39,639.20 478.69,639.20 480.09,641.20 482.29,735.00 484.79,735.00" fill="none" stroke="#6e5a80" stroke-width="1.3" stroke-opacity="1.0" stroke-linejoin="round" />
<polyline points="195.00,838.60 911.00,838.60" fill="none" stroke="#7a5a8e" stroke-width="2" stroke-opacity="1.0" stroke-linejoin="round" />
<polyline points="217.20,838.60 218.00,831.00 218.80,838.60" fill="none" stroke="#6f7dff" stroke-width="1.4" stroke-opacity="1.0" stroke-linejoin="round" />
<polyline points="195.00,838.60 390.50,838.60 392.50,754.60 395.00,745.15 396.80,749.88 404.40,745.15 405.20,751.45 407.40,807.10 410.00,832.30 413.50,838.60 414.43,838.60 416.43,754.60 418.93,745.15 420.73,749.88 428.33,745.15 429.13,751.45 431.33,807.10 433.93,832.30 437.43,838.60 438.36,838.60 440.36,754.60 442.86,747.25 452.36,796.60 454.86,822.85 457.36,836.50 459.36,838.60 462.29,838.60 464.29,754.60 466.79,745.15 468.59,749.88 476.19,745.15 476.99,751.45 479.19,807.10 481.79,832.30 485.29,838.60 486.22,838.60 488.22,754.60 490.72,747.25 500.22,796.60 502.72,822.85 505.22,836.50 507.22,838.60 510.15,838.60 512.15,754.60 514.65,745.15 516.45,749.88 524.05,745.15 524.85,751.45 527.05,807.10 529.65,832.30 533.15,838.60 534.08,838.60 536.08,754.60 538.58,747.25 548.08,796.60 550.58,822.85 553.08,836.50 555.08,838.60 558.01,838.60 560.01,754.60 562.51,745.15 564.31,749.88 571.91,745.15 572.71,751.45 574.91,807.10 577.51,832.30 581.01,838.60 581.94,838.60 583.94,754.60 586.44,747.25 595.94,796.60 598.44,822.85 600.94,836.50 602.94,838.60 605.87,838.60 607.87,754.60 610.37,747.25 619.87,796.60 622.37,822.85 624.87,836.50 626.87,838.60 629.80,838.60 631.80,754.60 634.30,745.15 636.10,749.88 643.70,745.15 644.50,751.45 646.70,807.10 649.30,832.30 652.80,838.60 653.73,838.60 655.73,754.60 658.23,745.15 660.03,749.88 667.63,745.15 668.43,751.45 670.63,807.10 673.23,832.30 676.73,838.60 677.66,838.60 679.66,754.60 682.16,747.25 691.66,796.60 694.16,822.85 696.66,836.50 698.66,838.60 701.59,838.60 703.59,754.60 706.09,747.25 715.59,796.60 718.09,822.85 720.59,836.50 722.59,838.60 725.52,838.60 727.52,754.60 730.02,745.15 731.82,749.88 739.42,745.15 740.22,751.45 742.42,807.10 745.02,832.30 748.52,838.60 749.45,838.60 751.45,754.60 753.95,745.15 755.75,749.88 763.35,745.15 764.15,751.45 766.35,807.10 768.95,832.30 772.45,838.60 911.00,838.60" fill="none" stroke="#6a3c3c" stroke-width="1.3" stroke-opacity="0.8" stroke-linejoin="round" />
<polyline points="195.00,838.60 390.50,838.60 392.50,754.60 395.00,747.25 404.50,796.60 407.00,822.85 409.50,836.50 411.50,838.60 414.43,838.60 416.43,754.60 418.93,747.25 428.43,796.60 430.93,822.85 433.43,836.50 435.43,838.60 438.36,838.60 440.36,754.60 442.86,747.25 452.36,796.60 454.86,822.85 457.36,836.50 459.36,838.60 462.29,838.60 464.29,754.60 466.79,747.25 476.29,796.60 478.79,822.85 481.29,836.50 483.29,838.60 486.22,838.60 488.22,754.60 490.72,747.25 500.22,796.60 502.72,822.85 505.22,836.50 507.22,838.60 510.15,838.60 512.15,754.60 514.65,747.25 524.15,796.60 526.65,822.85 529.15,836.50 531.15,838.60 534.08,838.60 536.08,754.60 538.58,745.15 540.38,749.88 547.98,745.15 548.78,751.45 550.98,807.10 553.58,832.30 557.08,838.60 558.01,838.60 560.01,754.60 562.51,747.25 572.01,796.60 574.51,822.85 577.01,836.50 579.01,838.60 581.94,838.60 583.94,754.60 586.44,745.15 588.24,749.88 595.84,745.15 596.64,751.45 598.84,807.10 601.44,832.30 604.94,838.60 605.87,838.60 607.87,754.60 610.37,747.25 619.87,796.60 622.37,822.85 624.87,836.50 626.87,838.60 629.80,838.60 631.80,754.60 634.30,745.15 636.10,749.88 643.70,745.15 644.50,751.45 646.70,807.10 649.30,832.30 652.80,838.60 653.73,838.60 655.73,754.60 658.23,747.25 667.73,796.60 670.23,822.85 672.73,836.50 674.73,838.60 677.66,838.60 679.66,754.60 682.16,747.25 691.66,796.60 694.16,822.85 696.66,836.50 698.66,838.60 701.59,838.60 703.59,754.60 706.09,747.25 715.59,796.60 718.09,822.85 720.59,836.50 722.59,838.60 725.52,838.60 727.52,754.60 730.02,747.25 739.52,796.60 742.02,822.85 744.52,836.50 746.52,838.60 749.45,838.60 751.45,754.60 753.95,745.15 755.75,749.88 763.35,745.15 764.15,751.45 766.35,807.10 768.95,832.30 772.45,838.60 911.00,838.60" fill="none" stroke="#2ee22e" stroke-width="1.3" stroke-opacity="0.8" stroke-linejoin="round" />
<polyline points="195.00,838.60 390.50,838.60 392.50,754.60 395.00,747.25 404.50,796.60 407.00,822.85 409.50,836.50 411.50,838.60 414.43,838.60 416.43,754.60 418.93,745.15 420.73,749.88 428.33,745.15 429.13,751.45 431.33,807.10 433.93,832.30 437.43,838.60 438.36,838.60 440.36,754.60 442.86,745.15 444.66,749.88 452.26,745.15 453.06,751.45 455.26,807.10 457.86,832.30 461.36,838.60 462.29,838.60 464.29,754.60 466.79,745.15 468.59,749.88 476.19,745.15 476.99,751.45 479.19,807.10 481.79,832.30 485.29,838.60 486.22,838.60 488.22,754.60 490.72,747.25 500.22,796.60 502.72,822.85 505.22,836.50 507.22,838.60 510.15,838.60 512.15,754.60 514.65,745.15 516.45,749.88 524.05,745.15 524.85,751.45 527.05,807.10 529.65,832.30 533.15,838.60 534.08,838.60 536.08,754.60 538.58,747.25 548.08,796.60 550.58,822.85 553.08,836.50 555.08,838.60 558.01,838.60 560.01,754.60 562.51,747.25 572.01,796.60 574.51,822.85 577.01,836.50 579.01,838.60 581.94,838.60 583.94,754.60 586.44,747.25 595.94,796.60 598.44,822.85 600.94,836.50 602.94,838.60 605.87,838.60 607.87,754.60 610.37,745.15 612.17,749.88 619.77,745.15 620.57,751.45 622.77,807.10 625.37,832.30 628.87,838.60 629.80,838.60 631.80,754.60 634.30,747.25 643.80,796.60 646.30,822.85 648.80,836.50 650.80,838.60 653.73,838.60 655.73,754.60 658.23,745.15 660.03,749.88 667.63,745.15 668.43,751.45 670.63,807.10 673.23,832.30 676.73,838.60 677.66,838.60 679.66,754.60 682.16,747.25 691.66,796.60 694.16,822.85 696.66,836.50 698.66,838.60 701.59,838.60 703.59,754.60 706.09,745.15 707.89,749.88 715.49,745.15 716.29,751.45 718.49,807.10 721.09,832.30 724.59,838.60 725.52,838.60 727.52,754.60 730.02,745.15 731.82,749.88 739.42,745.15 740.22,751.45 742.42,807.10 745.02,832.30 748.52,838.60 749.45,838.60 751.45,754.60 753.95,745.15 755.75,749.88 763.35,745.15 764.15,751.45 766.35,807.10 768.95,832.30 772.45,838.60 911.00,838.60" fill="none" stroke="#ff2a2a" stroke-width="1.3" stroke-opacity="0.8" stroke-linejoin="round" />
<polyline points="195.00,838.60 390.50,838.60 392.50,754.60 395.00,747.25 404.50,796.60 407.00,822.85 409.50,836.50 411.50,838.60 414.43,838.60 416.43,754.60 418.93,745.15 420.73,749.88 428.33,745.15 429.13,751.45 431.33,807.10 433.93,832.30 437.43,838.60 438.36,838.60 440.36,754.60 442.86,747.25 452.36,796.60 454.86,822.85 457.36,836.50 459.36,838.60 462.29,838.60 464.29,754.60 466.79,745.15 468.59,749.88 476.19,745.15 476.99,751.45 479.19,807.10 481.79,832.30 485.29,838.60 486.22,838.60 488.22,754.60 490.72,747.25 500.22,796.60 502.72,822.85 505.22,836.50 507.22,838.60 510.15,838.60 512.15,754.60 514.65,745.15 516.45,749.88 524.05,745.15 524.85,751.45 527.05,807.10 529.65,832.30 533.15,838.60 534.08,838.60 536.08,754.60 538.58,747.25 548.08,796.60 550.58,822.85 553.08,836.50 555.08,838.60 558.01,838.60 560.01,754.60 562.51,747.25 572.01,796.60 574.51,822.85 577.01,836.50 579.01,838.60 581.94,838.60 583.94,754.60 586.44,747.25 595.94,796.60 598.44,822.85 600.94,836.50 602.94,838.60 605.87,838.60 607.87,754.60 610.37,747.25 619.87,796.60 622.37,822.85 624.87,836.50 626.87,838.60 629.80,838.60 631.80,754.60 634.30,745.15 636.10,749.88 643.70,745.15 644.50,751.45 646.70,807.10 649.30,832.30 652.80,838.60 653.73,838.60 655.73,754.60 658.23,745.15 660.03,749.88 667.63,745.15 668.43,751.45 670.63,807.10 673.23,832.30 676.73,838.60 677.66,838.60 679.66,754.60 682.16,747.25 691.66,796.60 694.16,822.85 696.66,836.50 698.66,838.60 701.59,838.60 703.59,754.60 706.09,747.25 715.59,796.60 718.09,822.85 720.59,836.50 722.59,838.60 725.52,838.60 727.52,754.60 730.02,747.25 739.52,796.60 742.02,822.85 744.52,836.50 746.52,838.60 749.45,838.60 751.45,754.60 753.95,745.15 755.75,749.88 763.35,745.15 764.15,751.45 766.35,807.10 768.95,832.30 772.45,838.60 911.00,838.60" fill="none" stroke="#6f7dff" stroke-width="1.3" stroke-opacity="0.8" stroke-linejoin="round" />
<polyline points="195.00,939.00 216.40,939.00 219.10,849.00 399.00,849.00 400.30,939.00 494.60,939.00 495.90,849.00 566.40,849.00 567.70,939.00 590.30,939.00 591.60,849.00 614.30,849.00 615.60,939.00 686.00,939.00 687.30,849.00 758.00,849.00 759.30,939.00 769.00,939.00 771.00,942.50 911.00,942.50" fill="none" stroke="#1a1a1a" stroke-width="1.3" stroke-opacity="0.8" stroke-linejoin="round" />
<polyline points="195.00,939.00 216.40,939.00 219.10,849.00 542.50,849.00 543.80,939.00 566.40,939.00 567.70,849.00 590.30,849.00 591.60,939.00 614.30,939.00 615.60,849.00 638.20,849.00 639.50,939.00 662.10,939.00 663.40,849.00 734.00,849.00 735.30,939.00 769.00,939.00 771.00,942.50 911.00,942.50" fill="none" stroke="#2ee22e" stroke-width="1.3" stroke-opacity="0.8" stroke-linejoin="round" />
<polyline points="195.00,939.00 216.40,939.00 219.10,849.00 423.00,849.00 424.30,939.00 494.60,939.00 495.90,849.00 518.50,849.00 519.80,939.00 542.50,939.00 543.80,849.00 614.30,849.00 615.60,939.00 638.20,939.00 639.50,849.00 662.10,849.00 663.40,939.00 686.00,939.00 687.30,849.00 710.00,849.00 711.30,939.00 769.00,939.00 771.00,942.50 911.00,942.50" fill="none" stroke="#ff2a2a" stroke-width="1.3" stroke-opacity="0.8" stroke-linejoin="round" />
<polyline points="195.00,939.00 216.40,939.00 219.10,849.00 423.00,849.00 424.30,939.00 447.00,939.00 448.30,849.00 471.00,849.00 472.30,939.00 494.60,939.00 495.90,849.00 518.50,849.00 519.80,939.00 542.50,939.00 543.80,849.00 638.20,849.00 639.50,939.00 686.00,939.00 687.30,849.00 758.00,849.00 759.30,939.00 769.00,939.00 771.00,942.50 911.00,942.50" fill="none" stroke="#6f7dff" stroke-width="1.3" stroke-opacity="0.8" stroke-linejoin="round" />
<rect x="483.6" y="531" width="1.6" height="415" fill="#f4f45c"/>
</g>
<rect x="185.5" y="949.2" width="7.6" height="14.6" fill="#d9b994" />
<path d="M186.5 963 L192.6 956.5" stroke="#8a6a48" stroke-width="0.8"/>
<text x="197.0" y="961" font-family="Liberation Sans" font-size="13" fill="#3c3c3c" text-anchor="start" font-weight="normal" textLength="7.6" lengthAdjust="spacingAndGlyphs" >0</text>
<text x="264.09999999999997" y="961" font-family="Liberation Sans" font-size="13" fill="#3c3c3c" text-anchor="start" font-weight="normal" textLength="22.6" lengthAdjust="spacingAndGlyphs" >50n</text>
<text x="339.2" y="961" font-family="Liberation Sans" font-size="13" fill="#3c3c3c" text-anchor="start" font-weight="normal" textLength="31.2" lengthAdjust="spacingAndGlyphs" >100n</text>
<text x="414.0" y="961" font-family="Liberation Sans" font-size="13" fill="#3c3c3c" text-anchor="start" font-weight="normal" textLength="31.2" lengthAdjust="spacingAndGlyphs" >150n</text>
<text x="488.9" y="961" font-family="Liberation Sans" font-size="13" fill="#3c3c3c" text-anchor="start" font-weight="normal" textLength="31.2" lengthAdjust="spacingAndGlyphs" >200n</text>
<text x="563.6" y="961" font-family="Liberation Sans" font-size="13" fill="#3c3c3c" text-anchor="start" font-weight="normal" textLength="31.2" lengthAdjust="spacingAndGlyphs" >250n</text>
<text x="638.4" y="961" font-family="Liberation Sans" font-size="13" fill="#3c3c3c" text-anchor="start" font-weight="normal" textLength="31.2" lengthAdjust="spacingAndGlyphs" >300n</text>
<text x="713.3" y="961" font-family="Liberation Sans" font-size="13" fill="#3c3c3c" text-anchor="start" font-weight="normal" textLength="31.2" lengthAdjust="spacingAndGlyphs" >350n</text>
<text x="788.1" y="961" font-family="Liberation Sans" font-size="13" fill="#3c3c3c" text-anchor="start" font-weight="normal" textLength="31.2" lengthAdjust="spacingAndGlyphs" >400n</text>
<text x="862.9" y="961" font-family="Liberation Sans" font-size="13" fill="#3c3c3c" text-anchor="start" font-weight="normal" textLength="31.2" lengthAdjust="spacingAndGlyphs" >450n</text>
<text x="16.5" y="988" font-family="Liberation Sans" font-size="13" fill="#ff1a1a" text-anchor="start" font-weight="normal" textLength="187" lengthAdjust="spacingAndGlyphs" >Panel W 718 H 103 X 161 Y 63</text>
<rect x="457.9" y="966.1" width="454.8" height="34.6" fill="#cbcbcb" />
<rect x="460.5" y="980.2" width="449.5" height="5.8" rx="2.9" fill="#7a7e7e"/>
</svg></body></html>
